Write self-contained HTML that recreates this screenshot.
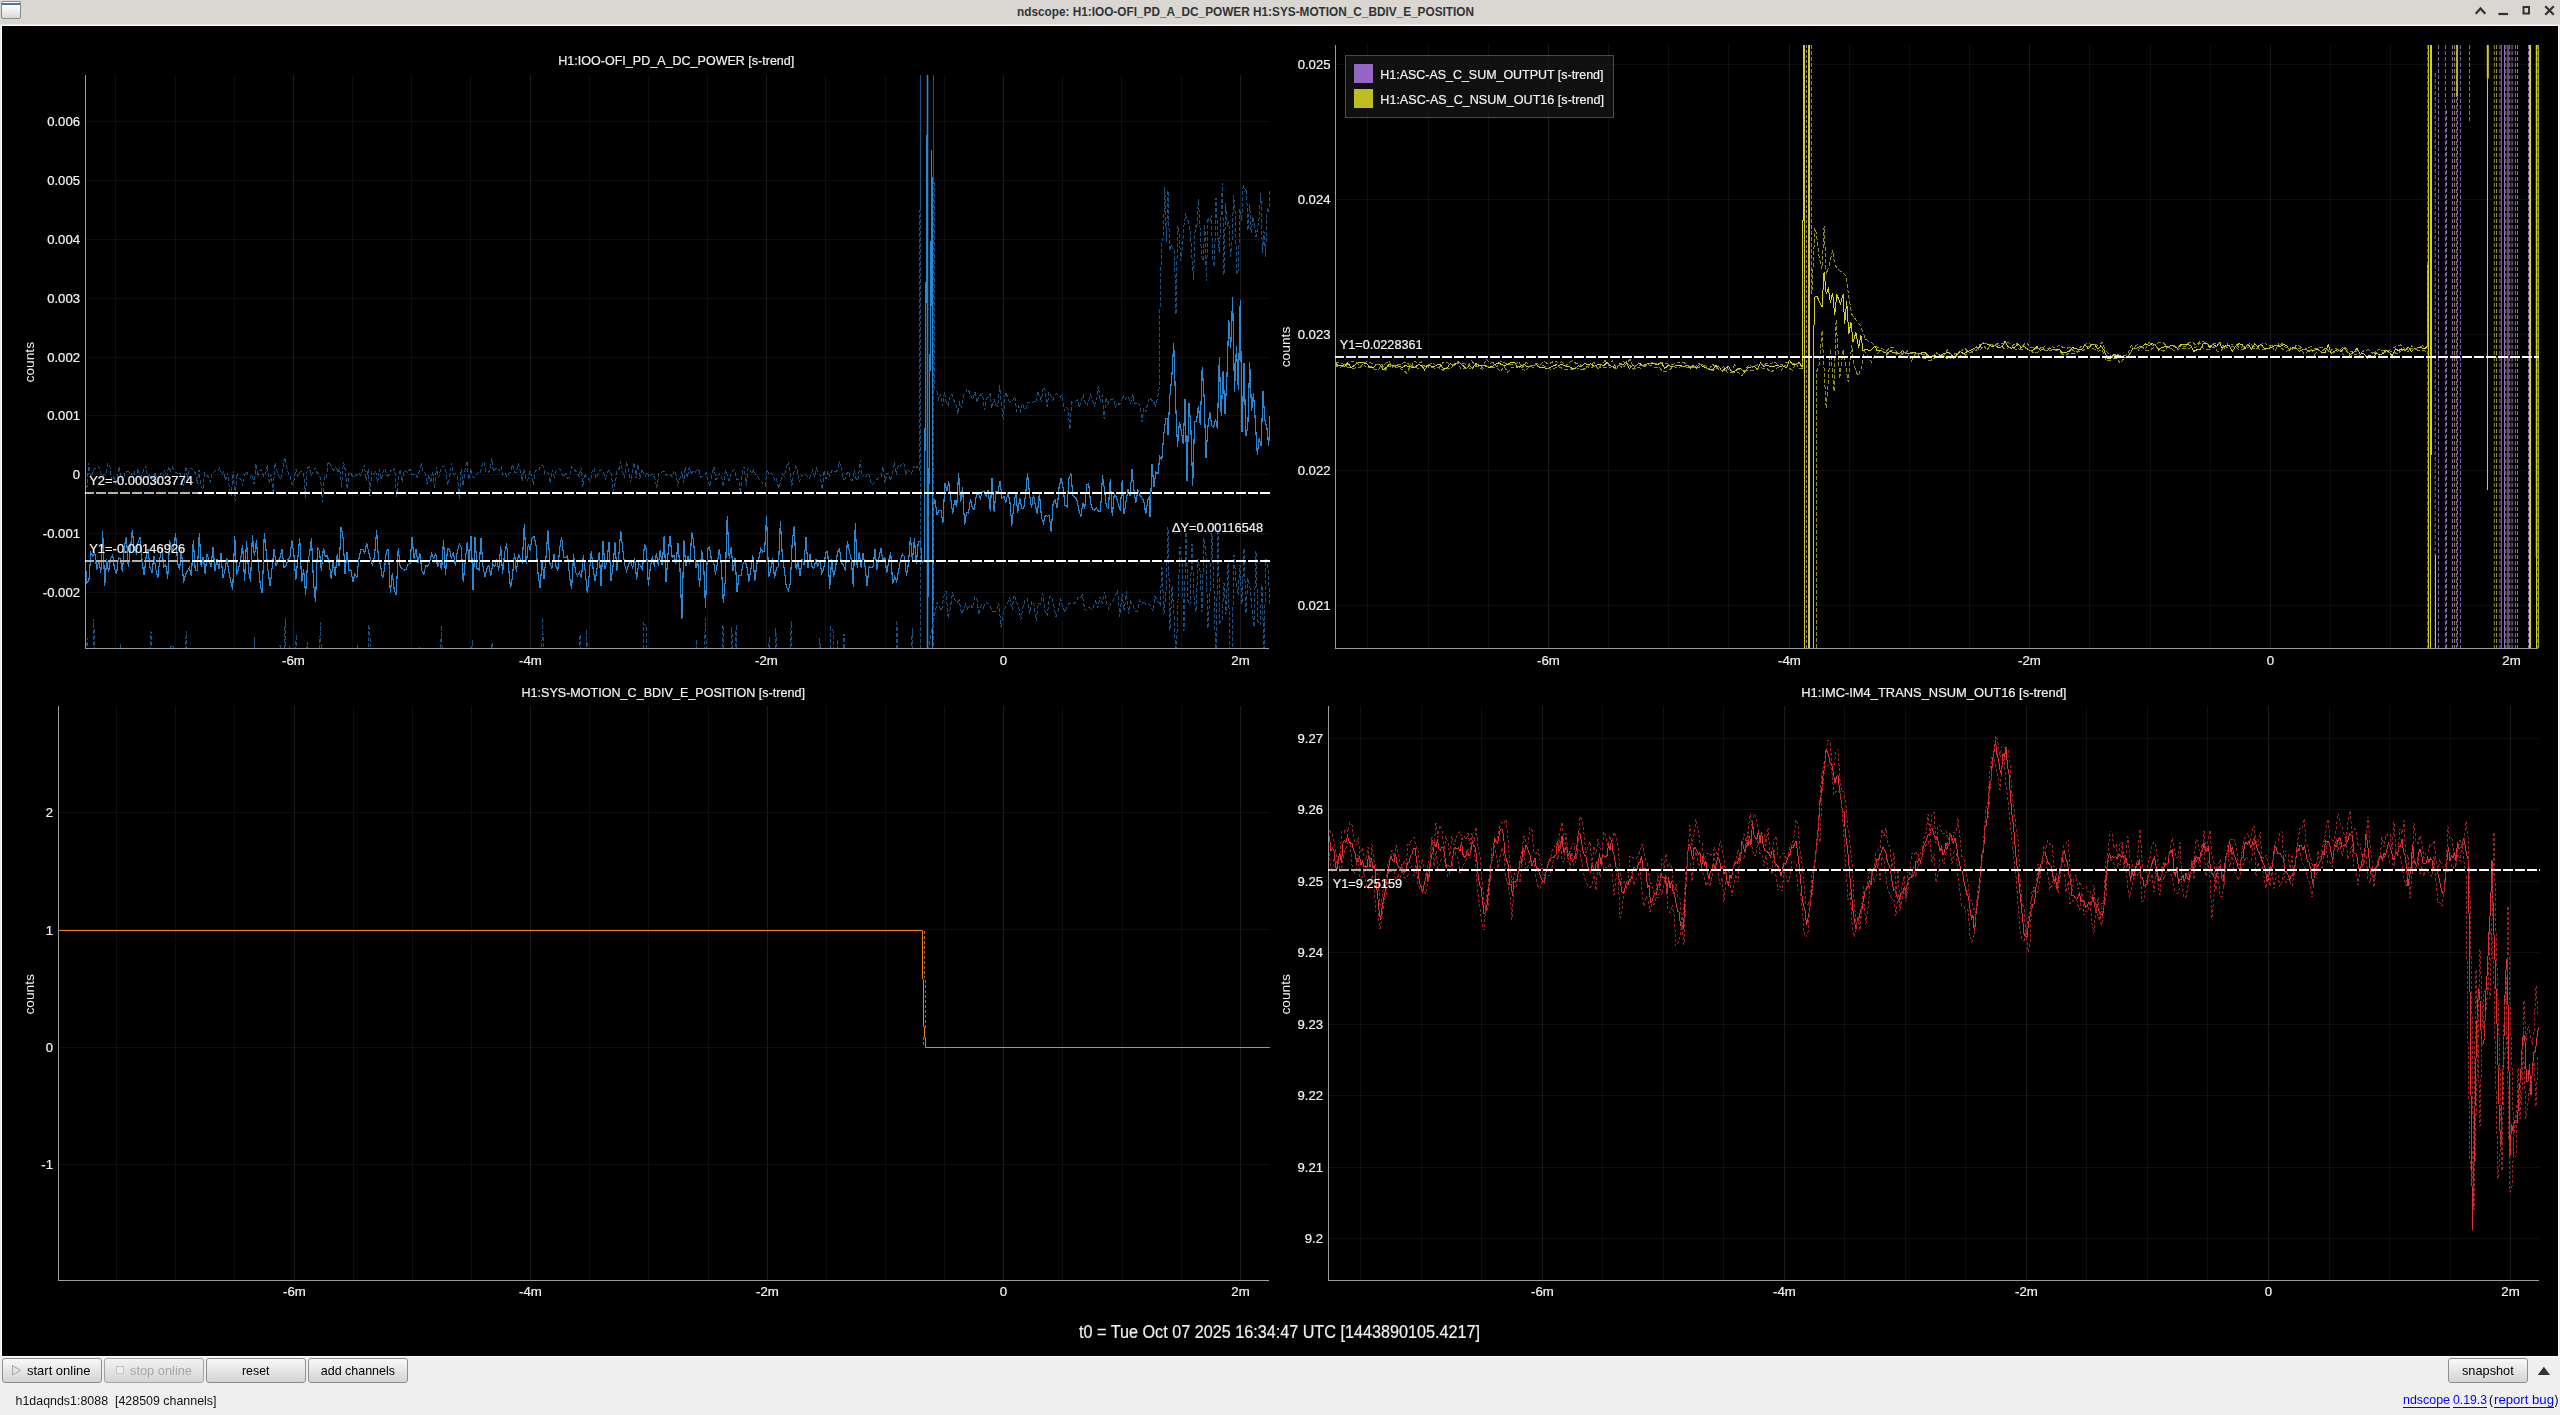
<!DOCTYPE html>
<html><head><meta charset="utf-8"><title>ndscope</title>
<style>
html,body{margin:0;padding:0;width:2560px;height:1415px;overflow:hidden;background:#efefef;font-family:'Liberation Sans',sans-serif;}
.abs{position:absolute}
#titlebar{left:0;top:0;width:2560px;height:24px;background:#dad6d2;}
#panel{left:2px;top:26px;width:2556px;height:1330px;background:#000;}
.btn{position:absolute;top:1358px;height:25px;box-sizing:border-box;border:1px solid #8e8e8e;border-radius:3px;background:linear-gradient(#f9f9f9,#d3d3d3);}
.bt{position:absolute;font-size:13px;color:#000;white-space:pre;top:4px;line-height:15px}
</style></head><body>
<div class="abs" id="titlebar"></div>
<div class="abs" style="left:0;top:24px;width:2560px;height:1px;background:#e9e8e6"></div>
<div class="abs" style="left:1px;top:25px;width:2558px;height:1332px;background:#fff"></div>
<div class="abs" id="panel"></div>
<div class="abs" style="left:1px;top:1px;width:20px;height:18px;box-sizing:border-box;border:1px solid #8a8a86;border-radius:2px;background:linear-gradient(#ffffff 20%,#d8dad6)"></div>
<div class="abs" style="left:2px;top:3px;width:18px;height:2px;background:#4a73ad"></div>
<svg class="abs" style="left:0;top:0" width="2560" height="24"><text x="1017" y="15.5" font-family="'Liberation Sans', sans-serif" font-size="13" font-weight="bold" fill="#2e3436" textLength="457" lengthAdjust="spacingAndGlyphs">ndscope: H1:IOO-OFI_PD_A_DC_POWER H1:SYS-MOTION_C_BDIV_E_POSITION</text><g stroke="#2e3436" stroke-width="2.2" fill="none" stroke-linecap="square">
<path d="M2476.5 13 L2480.5 8.5 L2484.5 13"/>
<path d="M2499.5 14 L2507 14"/>
<rect x="2523.5" y="7" width="5.5" height="6.5" stroke-width="2"/>
<path d="M2546 7 L2553 14 M2553 7 L2546 14"/>
</g></svg>
<svg width="2560" height="1415" viewBox="0 0 2560 1415" style="position:absolute;left:0;top:0;will-change:transform">
<defs>
<clipPath id="cTL"><rect x="85" y="75" width="1185" height="573"/></clipPath>
<clipPath id="cTR"><rect x="1335" y="45" width="1204" height="603"/></clipPath>
<clipPath id="cBL"><rect x="58" y="706" width="1212" height="574"/></clipPath>
<clipPath id="cBR"><rect x="1328" y="706" width="1212" height="574"/></clipPath>
</defs>
<g shape-rendering="crispEdges" stroke-width="1">
<line x1="115.5" y1="75" x2="115.5" y2="648" stroke="#0f0f0f"/>
<line x1="175.5" y1="75" x2="175.5" y2="648" stroke="#0f0f0f"/>
<line x1="234.5" y1="75" x2="234.5" y2="648" stroke="#0f0f0f"/>
<line x1="352.5" y1="75" x2="352.5" y2="648" stroke="#0f0f0f"/>
<line x1="411.5" y1="75" x2="411.5" y2="648" stroke="#0f0f0f"/>
<line x1="470.5" y1="75" x2="470.5" y2="648" stroke="#0f0f0f"/>
<line x1="589.5" y1="75" x2="589.5" y2="648" stroke="#0f0f0f"/>
<line x1="648.5" y1="75" x2="648.5" y2="648" stroke="#0f0f0f"/>
<line x1="707.5" y1="75" x2="707.5" y2="648" stroke="#0f0f0f"/>
<line x1="825.5" y1="75" x2="825.5" y2="648" stroke="#0f0f0f"/>
<line x1="885.5" y1="75" x2="885.5" y2="648" stroke="#0f0f0f"/>
<line x1="944.5" y1="75" x2="944.5" y2="648" stroke="#0f0f0f"/>
<line x1="1062.5" y1="75" x2="1062.5" y2="648" stroke="#0f0f0f"/>
<line x1="1121.5" y1="75" x2="1121.5" y2="648" stroke="#0f0f0f"/>
<line x1="1181.5" y1="75" x2="1181.5" y2="648" stroke="#0f0f0f"/>
<line x1="85" y1="121.5" x2="1269" y2="121.5" stroke="#0f0f0f"/>
<line x1="85" y1="180.5" x2="1269" y2="180.5" stroke="#0f0f0f"/>
<line x1="85" y1="239.5" x2="1269" y2="239.5" stroke="#0f0f0f"/>
<line x1="85" y1="298.5" x2="1269" y2="298.5" stroke="#0f0f0f"/>
<line x1="85" y1="357.5" x2="1269" y2="357.5" stroke="#0f0f0f"/>
<line x1="85" y1="415.5" x2="1269" y2="415.5" stroke="#0f0f0f"/>
<line x1="85" y1="474.5" x2="1269" y2="474.5" stroke="#0f0f0f"/>
<line x1="85" y1="533.5" x2="1269" y2="533.5" stroke="#0f0f0f"/>
<line x1="85" y1="592.5" x2="1269" y2="592.5" stroke="#0f0f0f"/>
<line x1="293.5" y1="75" x2="293.5" y2="648" stroke="#1c1c1c"/>
<line x1="530.5" y1="75" x2="530.5" y2="648" stroke="#1c1c1c"/>
<line x1="766.5" y1="75" x2="766.5" y2="648" stroke="#1c1c1c"/>
<line x1="1003.5" y1="75" x2="1003.5" y2="648" stroke="#1c1c1c"/>
<line x1="1240.5" y1="75" x2="1240.5" y2="648" stroke="#1c1c1c"/>
</g>
<g shape-rendering="crispEdges" stroke-width="1">
<line x1="1367.5" y1="45" x2="1367.5" y2="648" stroke="#0f0f0f"/>
<line x1="1428.5" y1="45" x2="1428.5" y2="648" stroke="#0f0f0f"/>
<line x1="1488.5" y1="45" x2="1488.5" y2="648" stroke="#0f0f0f"/>
<line x1="1608.5" y1="45" x2="1608.5" y2="648" stroke="#0f0f0f"/>
<line x1="1668.5" y1="45" x2="1668.5" y2="648" stroke="#0f0f0f"/>
<line x1="1728.5" y1="45" x2="1728.5" y2="648" stroke="#0f0f0f"/>
<line x1="1849.5" y1="45" x2="1849.5" y2="648" stroke="#0f0f0f"/>
<line x1="1909.5" y1="45" x2="1909.5" y2="648" stroke="#0f0f0f"/>
<line x1="1969.5" y1="45" x2="1969.5" y2="648" stroke="#0f0f0f"/>
<line x1="2089.5" y1="45" x2="2089.5" y2="648" stroke="#0f0f0f"/>
<line x1="2150.5" y1="45" x2="2150.5" y2="648" stroke="#0f0f0f"/>
<line x1="2210.5" y1="45" x2="2210.5" y2="648" stroke="#0f0f0f"/>
<line x1="2330.5" y1="45" x2="2330.5" y2="648" stroke="#0f0f0f"/>
<line x1="2390.5" y1="45" x2="2390.5" y2="648" stroke="#0f0f0f"/>
<line x1="2451.5" y1="45" x2="2451.5" y2="648" stroke="#0f0f0f"/>
<line x1="1335" y1="64.5" x2="2538" y2="64.5" stroke="#0f0f0f"/>
<line x1="1335" y1="199.5" x2="2538" y2="199.5" stroke="#0f0f0f"/>
<line x1="1335" y1="334.5" x2="2538" y2="334.5" stroke="#0f0f0f"/>
<line x1="1335" y1="470.5" x2="2538" y2="470.5" stroke="#0f0f0f"/>
<line x1="1335" y1="605.5" x2="2538" y2="605.5" stroke="#0f0f0f"/>
<line x1="1548.5" y1="45" x2="1548.5" y2="648" stroke="#1c1c1c"/>
<line x1="1789.5" y1="45" x2="1789.5" y2="648" stroke="#1c1c1c"/>
<line x1="2029.5" y1="45" x2="2029.5" y2="648" stroke="#1c1c1c"/>
<line x1="2270.5" y1="45" x2="2270.5" y2="648" stroke="#1c1c1c"/>
<line x1="2511.5" y1="45" x2="2511.5" y2="648" stroke="#1c1c1c"/>
</g>
<g shape-rendering="crispEdges" stroke-width="1">
<line x1="116.5" y1="706" x2="116.5" y2="1280" stroke="#0f0f0f"/>
<line x1="175.5" y1="706" x2="175.5" y2="1280" stroke="#0f0f0f"/>
<line x1="234.5" y1="706" x2="234.5" y2="1280" stroke="#0f0f0f"/>
<line x1="353.5" y1="706" x2="353.5" y2="1280" stroke="#0f0f0f"/>
<line x1="412.5" y1="706" x2="412.5" y2="1280" stroke="#0f0f0f"/>
<line x1="471.5" y1="706" x2="471.5" y2="1280" stroke="#0f0f0f"/>
<line x1="589.5" y1="706" x2="589.5" y2="1280" stroke="#0f0f0f"/>
<line x1="648.5" y1="706" x2="648.5" y2="1280" stroke="#0f0f0f"/>
<line x1="708.5" y1="706" x2="708.5" y2="1280" stroke="#0f0f0f"/>
<line x1="826.5" y1="706" x2="826.5" y2="1280" stroke="#0f0f0f"/>
<line x1="885.5" y1="706" x2="885.5" y2="1280" stroke="#0f0f0f"/>
<line x1="944.5" y1="706" x2="944.5" y2="1280" stroke="#0f0f0f"/>
<line x1="1062.5" y1="706" x2="1062.5" y2="1280" stroke="#0f0f0f"/>
<line x1="1122.5" y1="706" x2="1122.5" y2="1280" stroke="#0f0f0f"/>
<line x1="1181.5" y1="706" x2="1181.5" y2="1280" stroke="#0f0f0f"/>
<line x1="58" y1="812.5" x2="1269" y2="812.5" stroke="#0f0f0f"/>
<line x1="58" y1="929.5" x2="1269" y2="929.5" stroke="#0f0f0f"/>
<line x1="58" y1="1047.5" x2="1269" y2="1047.5" stroke="#0f0f0f"/>
<line x1="58" y1="1164.5" x2="1269" y2="1164.5" stroke="#0f0f0f"/>
<line x1="294.5" y1="706" x2="294.5" y2="1280" stroke="#1c1c1c"/>
<line x1="530.5" y1="706" x2="530.5" y2="1280" stroke="#1c1c1c"/>
<line x1="767.5" y1="706" x2="767.5" y2="1280" stroke="#1c1c1c"/>
<line x1="1003.5" y1="706" x2="1003.5" y2="1280" stroke="#1c1c1c"/>
<line x1="1240.5" y1="706" x2="1240.5" y2="1280" stroke="#1c1c1c"/>
</g>
<g shape-rendering="crispEdges" stroke-width="1">
<line x1="1360.5" y1="706" x2="1360.5" y2="1280" stroke="#0f0f0f"/>
<line x1="1421.5" y1="706" x2="1421.5" y2="1280" stroke="#0f0f0f"/>
<line x1="1481.5" y1="706" x2="1481.5" y2="1280" stroke="#0f0f0f"/>
<line x1="1602.5" y1="706" x2="1602.5" y2="1280" stroke="#0f0f0f"/>
<line x1="1663.5" y1="706" x2="1663.5" y2="1280" stroke="#0f0f0f"/>
<line x1="1723.5" y1="706" x2="1723.5" y2="1280" stroke="#0f0f0f"/>
<line x1="1844.5" y1="706" x2="1844.5" y2="1280" stroke="#0f0f0f"/>
<line x1="1905.5" y1="706" x2="1905.5" y2="1280" stroke="#0f0f0f"/>
<line x1="1965.5" y1="706" x2="1965.5" y2="1280" stroke="#0f0f0f"/>
<line x1="2086.5" y1="706" x2="2086.5" y2="1280" stroke="#0f0f0f"/>
<line x1="2147.5" y1="706" x2="2147.5" y2="1280" stroke="#0f0f0f"/>
<line x1="2207.5" y1="706" x2="2207.5" y2="1280" stroke="#0f0f0f"/>
<line x1="2329.5" y1="706" x2="2329.5" y2="1280" stroke="#0f0f0f"/>
<line x1="2389.5" y1="706" x2="2389.5" y2="1280" stroke="#0f0f0f"/>
<line x1="2450.5" y1="706" x2="2450.5" y2="1280" stroke="#0f0f0f"/>
<line x1="1328" y1="738.5" x2="2539" y2="738.5" stroke="#0f0f0f"/>
<line x1="1328" y1="809.5" x2="2539" y2="809.5" stroke="#0f0f0f"/>
<line x1="1328" y1="881.5" x2="2539" y2="881.5" stroke="#0f0f0f"/>
<line x1="1328" y1="952.5" x2="2539" y2="952.5" stroke="#0f0f0f"/>
<line x1="1328" y1="1024.5" x2="2539" y2="1024.5" stroke="#0f0f0f"/>
<line x1="1328" y1="1095.5" x2="2539" y2="1095.5" stroke="#0f0f0f"/>
<line x1="1328" y1="1167.5" x2="2539" y2="1167.5" stroke="#0f0f0f"/>
<line x1="1328" y1="1238.5" x2="2539" y2="1238.5" stroke="#0f0f0f"/>
<line x1="1542.5" y1="706" x2="1542.5" y2="1280" stroke="#1c1c1c"/>
<line x1="1784.5" y1="706" x2="1784.5" y2="1280" stroke="#1c1c1c"/>
<line x1="2026.5" y1="706" x2="2026.5" y2="1280" stroke="#1c1c1c"/>
<line x1="2268.5" y1="706" x2="2268.5" y2="1280" stroke="#1c1c1c"/>
<line x1="2510.5" y1="706" x2="2510.5" y2="1280" stroke="#1c1c1c"/>
</g>
<path clip-path="url(#cTL)" d="M85 561.5L87 582.8L88.9 580.6L90.9 552.8L92.9 556.2L94.8 552.6L96.8 570.1L98.8 560.1L100.8 573L102.7 531.4L104.7 586.1L106.7 559.5L108.6 571.9L110.6 558.8L112.6 554.9L114.5 568.4L116.5 574.2L118.5 557.8L120.5 558.6L122.4 572L124.4 547.1L126.4 536.8L128.3 567.3L130.3 550.3L132.3 530.3L134.2 548L136.2 553.5L138.2 541.9L140.2 537.1L142.1 561.6L144.1 575.4L146.1 557.3L148 549.1L150 567.2L152 572.5L153.9 556.2L155.9 569.7L157.9 577.7L159.9 557.7L161.8 548L163.8 566.6L165.8 565L167.7 578.6L169.7 540.4L171.7 550.4L173.6 547.6L175.6 533.3L177.6 563L179.6 569.4L181.5 549.2L183.5 583.2L185.5 574.2L187.4 571L189.4 567.4L191.4 576.3L193.3 539.7L195.3 570.8L197.3 570.6L199.3 532.7L201.2 566.6L203.2 557L205.2 573.5L207.1 554L209.1 560.7L211.1 566.5L213 547L215 570.6L217 559.3L219 568.9L220.9 552.7L222.9 578.4L224.9 570.7L226.8 558.2L228.8 571.1L230.8 581.2L232.7 589.7L234.7 535.8L236.7 575.1L238.7 568.4L240.6 559.5L242.6 544.9L244.6 581.1L246.5 540.8L248.5 570.1L250.5 581.8L252.4 535.4L254.4 556.2L256.4 540.1L258.4 564.9L260.3 585.2L262.3 593.4L264.3 532.6L266.2 551.8L268.2 572.3L270.2 586.3L272.1 567.7L274.1 549.1L276.1 565.8L278.1 560.7L280 557.7L282 549.2L284 567.2L285.9 565.9L287.9 559.5L289.9 557.5L291.8 540.4L293.8 553.2L295.8 580.3L297.8 558L299.7 538L301.7 582.4L303.7 569.5L305.6 594.7L307.6 562L309.6 553.6L311.5 537.8L313.5 582.2L315.5 602.1L317.5 547.9L319.4 550.6L321.4 570.5L323.4 547.7L325.3 556.7L327.3 555.4L329.3 564.1L331.2 578.5L333.2 561.4L335.2 575.7L337.2 554.3L339.1 566.2L341.1 526.8L343.1 537.8L345 573.7L347 551.6L349 570.3L350.9 569.7L352.9 582.2L354.9 574L356.9 577.3L358.8 559.2L360.8 549.8L362.8 549.3L364.7 553.2L366.7 542.9L368.7 552.2L370.6 559.5L372.6 565L374.6 555.6L376.6 530.2L378.5 559.8L380.5 564.6L382.5 578.4L384.4 570.2L386.4 550.7L388.4 549.4L390.3 593.2L392.3 573.1L394.3 590.3L396.3 595.1L398.2 547.9L400.2 567.2L402.2 568.3L404.1 570L406.1 569.7L408.1 564.2L410 563.8L412 537L414 558.4L416 549L417.9 563L419.9 553.5L421.9 570.9L423.8 574.1L425.8 565.9L427.8 566.1L429.7 562.5L431.7 553.8L433.7 558.4L435.7 553.1L437.6 567.2L439.6 561.2L441.6 570.3L443.5 539.7L445.5 575.2L447.5 548.8L449.4 549.3L451.4 557.8L453.4 552L455.4 565.7L457.3 551.8L459.3 543.9L461.3 547.5L463.2 582L465.2 561.7L467.2 542.3L469.1 561.1L471.1 536.1L473.1 589.6L475.1 536.6L477 568.7L479 569.7L481 537.8L482.9 565.8L484.9 577L486.9 568.5L488.8 565.2L490.8 576.2L492.8 563.6L494.8 566.4L496.7 559L498.7 571.1L500.7 545.9L502.6 573.7L504.6 552.9L506.6 543.5L508.5 566.8L510.5 588.1L512.5 576.4L514.5 552.7L516.4 572.2L518.4 553.7L520.4 559L522.3 562.4L524.3 523.9L526.3 564.1L528.2 544.5L530.2 549.8L532.2 537.4L534.2 536.7L536.1 545.9L538.1 574.2L540.1 587.7L542 560.6L544 578.5L546 556.8L547.9 530.4L549.9 563.4L551.9 568.1L553.9 554.1L555.8 565.8L557.8 570.2L559.8 547.2L561.7 537.4L563.7 557.5L565.7 557.6L567.6 555.4L569.6 576.8L571.6 588.6L573.6 554.3L575.5 572.2L577.5 576.1L579.5 572.4L581.4 577.8L583.4 554.8L585.4 572.8L587.3 593.4L589.3 573.9L591.3 551.1L593.3 570.7L595.2 581.2L597.2 566.9L599.2 552L601.1 585.7L603.1 541L605.1 569.1L607 560.7L609 541.9L611 580.5L613 566.6L614.9 542.3L616.9 570.6L618.9 554.1L620.8 530.6L622.8 550L624.8 565.2L626.7 571.2L628.7 563.6L630.7 561.7L632.7 568.5L634.6 557.6L636.6 579.8L638.6 563.4L640.5 565.7L642.5 569.7L644.5 544.1L646.4 549.7L648.4 585.5L650.4 566.4L652.4 556.5L654.3 566.5L656.3 553.3L658.3 565.5L660.2 550.3L662.2 565.4L664.2 535.8L666.1 582.3L668.1 552.8L670.1 535.7L672.1 557.4L674 555.1L676 563.4L678 542.7L679.9 567.4L681.9 619L683.9 540.5L685.8 566.4L687.8 556L689.8 564.1L691.8 532L693.7 542.6L695.7 568.4L697.7 560.4L699.6 587.2L701.6 549.7L703.6 563.8L705.5 607.6L707.5 548.8L709.5 546.5L711.5 560.4L713.4 560.3L715.4 574.5L717.4 563.1L719.3 548.9L721.3 564.4L723.3 603.2L725.2 581.3L727.2 516.5L729.2 558.7L731.2 547L733.1 571L735.1 558.2L737.1 591.9L739 575.9L741 575.2L743 564L744.9 560.4L746.9 566.4L748.9 581.7L750.9 569.6L752.8 555.4L754.8 581.4L756.8 564.1L758.7 559.8L760.7 548.3L762.7 551.9L764.6 550.8L766.6 516.3L768.6 577.3L770.6 570.1L772.5 557.6L774.5 577.7L776.5 568L778.4 566.9L780.4 521.4L782.4 557.3L784.3 569.5L786.3 586.8L788.3 590.4L790.3 583.8L792.2 542.4L794.2 525.8L796.2 570.1L798.1 561.4L800.1 576.4L802.1 559L804 564.5L806 537L808 568.2L810 553.9L811.9 566.6L813.9 568.4L815.9 559.1L817.8 566.1L819.8 560.8L821.8 573.1L823.7 569L825.7 552.2L827.7 551.6L829.7 588.9L831.6 559.4L833.6 576.9L835.6 567.3L837.5 552L839.5 549L841.5 562.9L843.4 565.1L845.4 570.8L847.4 540.7L849.4 551.5L851.3 559.5L853.3 586.6L855.3 523.2L857.2 568L859.2 552.4L861.2 567.9L863.1 553.1L865.1 566.8L867.1 586L869.1 566.7L871 567.9L873 567L875 549L876.9 569.7L878.9 557.7L880.9 548L882.8 560.4L884.8 557.4L886.8 573.1L888.8 560.3L890.7 552.5L892.7 584.3L894.7 576.8L896.6 581.3L898.6 570.7L900.6 559.2L902.5 554.3L904.5 556.5L906.5 576.2L908.5 562.8L910.4 537.3L912.4 560.4L914.4 538.3L916.3 563.7L918.3 541.7L920.3 540.8L922.2 562.9L924.2 559.7L927.5 75L927.5 648L931.9 150L932.5 648L934 499L935 499.9L937 514.6L938.9 510.4L940.9 510.1L942.9 522.7L944.9 483.1L946.8 491.2L948.8 481.5L950.8 498.5L952.7 514L954.7 499.7L956.7 506.9L958.6 473.2L960.6 502.1L962.6 487.3L964.6 524.9L966.5 512.4L968.5 513.3L970.5 499.2L972.4 508.6L974.4 509.2L976.4 495.2L978.3 493L980.3 498.4L982.3 491.5L984.3 491.7L986.2 496L988.2 489.8L990.2 510.7L992.1 477.7L994.1 511.5L996.1 491.2L998 492.4L1000 481.1L1002 498L1004 496.5L1005.9 502.7L1007.9 492.5L1009.9 501.3L1011.8 525.5L1013.8 505.7L1015.8 492L1017.7 513.3L1019.7 498.2L1021.7 508.3L1023.7 508.6L1025.6 494.5L1027.6 473L1029.6 495.1L1031.5 507.7L1033.5 494.7L1035.5 506.1L1037.4 513.7L1039.4 492.4L1041.4 517.2L1043.4 522.7L1045.3 515.1L1047.3 516.3L1049.3 515.4L1051.2 531.6L1053.2 502.6L1055.2 500L1057.1 508.4L1059.1 487.3L1061.1 478.3L1063.1 487.7L1065 505.2L1067 506.6L1069 478.5L1070.9 473.6L1072.9 495.6L1074.9 497.4L1076.8 499.3L1078.8 509.4L1080.8 517.2L1082.8 503.2L1084.7 508.6L1086.7 484.7L1088.7 483.5L1090.6 503.3L1092.6 509.3L1094.6 510.2L1096.5 508.3L1098.5 511L1100.5 511.3L1102.5 475.5L1104.4 489.7L1106.4 506.4L1108.4 508.4L1110.3 478.8L1112.3 516.4L1114.3 493.9L1116.2 496.7L1118.2 503.8L1120.2 510.5L1122.2 479.9L1124.1 513.9L1126.1 501.1L1128.1 489.2L1130 496.1L1132 469.4L1134 490.9L1135.9 502.5L1137.9 490.1L1139.9 495.4L1141.9 497.9L1143.8 500.7L1145.8 514.3L1147.8 499.7L1149.7 496.4L1150 516.8L1152 463.7L1153.9 486.9L1155.9 472.4L1157.9 473.8L1159.9 456.6L1161.8 459.5L1163.8 434.6L1165.8 418.4L1167.7 418.2L1168 435L1169.9 395.8L1171.8 377.4L1173.7 342.7L1175.6 401.9L1177.5 446.8L1179.4 421.7L1181.3 430.8L1183.2 444.2L1185.1 399.1L1187 480.8L1188.9 402.9L1190.8 425.6L1192.7 485.5L1194.6 422L1196.5 421.2L1198.4 405.8L1200.3 424.9L1202.2 366.7L1204.1 396.9L1206 457.5L1207.9 426.9L1209.8 412.2L1211.7 425.8L1213.6 427.6L1215.5 419.4L1217.4 428.7L1219.3 357.4L1221.2 416.1L1223.1 371.4L1225 414.2L1226.9 378L1228.8 320L1230.7 347.9L1232.6 296.7L1234.5 391.7L1236.4 346.4L1238.3 390.2L1240.2 300.1L1242.1 432.3L1244 363.2L1245.9 436L1247.8 427.3L1249.7 362.4L1251.6 411.4L1253.5 393.3L1255.4 422.7L1257.3 454.7L1259.2 438.1L1261.1 446.4L1263 391.1L1264.9 420.2L1266.8 427L1268.7 445.5L1270.6 405.6" fill="none" stroke="#2b86cf" stroke-width="1.15" stroke-linejoin="miter" shape-rendering="crispEdges"/>
<line clip-path="url(#cTL)" x1="927.5" y1="75" x2="927.5" y2="648" stroke="#2b86cf" stroke-width="1.6"/>
<path clip-path="url(#cTL)" d="M85 481L86.9 488L88.8 463.1L90.7 480.4L92.6 471.8L94.5 468L96.4 468L98.3 466.6L100.2 470.9L102.1 476.2L104 474.9L105.9 475.2L107.8 463.5L109.7 464.1L111.6 479.8L113.5 476.8L115.4 482.9L117.3 478L119.2 466.9L121.1 478.4L123 480.8L124.9 473.1L126.8 471.4L128.7 472L130.6 472.1L132.5 476.5L134.4 472.6L136.3 480.5L138.2 468.2L140.1 480.1L142 474.5L143.9 469.2L145.8 466.1L147.7 477.1L149.6 474.6L151.5 479.1L153.4 477.5L155.3 472.2L157.2 482.8L159.1 478.7L161 472.9L162.9 476.9L164.8 471.2L166.7 476.7L168.6 466.8L170.5 470.6L172.4 467.1L174.3 471.6L176.2 472.4L178.1 474.3L180 473.2L181.9 478.8L183.8 486.3L185.7 465.9L187.6 479.4L189.5 468.2L191.4 468.3L193.3 471.1L195.2 472.6L197.1 483.5L199 470L200.9 486.1L202.8 489.8L204.7 473.1L206.6 475.3L208.5 476.7L210.4 481.6L212.3 472.9L214.2 471.9L216.1 470L218 470.7L219.9 467.3L221.8 475.2L223.7 471.7L225.6 480.1L227.5 473L229.4 488.3L231.3 496.1L233.2 470.6L235.1 500.5L237 473L238.9 478.3L240.8 479.1L242.7 485.6L244.6 475.5L246.5 471.4L248.4 475.7L250.3 477.3L252.2 474.5L254.1 484.3L256 463.6L257.9 476.7L259.8 470.5L261.7 469.9L263.6 476.5L265.5 474.7L267.4 464.9L269.3 483.7L271.2 474.6L273.1 491.6L275 463L276.9 471.1L278.8 475.6L280.7 479.6L282.6 469.8L284.5 457.3L286.4 465.1L288.3 473.3L290.2 476.3L292.1 484.6L294 479.9L295.9 468.9L297.8 476.4L299.7 472.2L301.6 471.6L303.5 472.1L305.4 497.6L307.3 467.5L309.2 466.9L311.1 475.5L313 472.2L314.9 467.9L316.8 472.5L318.7 473.9L320.6 478.7L322.5 501.9L324.4 476.6L326.3 478.2L328.2 462L330.1 464.4L332 468.5L333.9 470.2L335.8 467.1L337.7 472.3L339.6 468L341.5 487.2L343.4 461.8L345.3 469.7L347.2 489.1L349.1 471.9L351 473.6L352.9 477.2L354.8 476.1L356.7 474.9L358.6 473.1L360.5 475.6L362.4 471.1L364.3 464.8L366.2 480.8L368.1 469.2L370 496.1L371.9 471L373.8 474.4L375.7 471.1L377.6 482.7L379.5 469.3L381.4 479.6L383.3 470.5L385.2 469L387.1 476.3L389 474.6L390.9 469.9L392.8 471.5L394.7 468.5L396.6 496.9L398.5 478.8L400.4 469.4L402.3 482.1L404.2 470.2L406.1 471.8L408 472.3L409.9 469.2L411.8 474.1L413.7 474.3L415.6 474.6L417.5 477.5L419.4 470.6L421.3 464.6L423.2 471.5L425.1 473L427 484.1L428.9 474.9L430.8 482.4L432.7 471.4L434.6 488.6L436.5 467.1L438.4 478L440.3 471L442.2 466.6L444.1 466.4L446 472.2L447.9 485.1L449.8 475.9L451.7 463.5L453.6 474.4L455.5 473.7L457.4 475.1L459.3 499.1L461.2 468.8L463.1 485.2L465 470.1L466.9 460.9L468.8 479.5L470.7 468.7L472.6 476.8L474.5 477.7L476.4 474.3L478.3 472.9L480.2 473.4L482.1 464.8L484 461.7L485.9 471.5L487.8 473L489.7 470.6L491.6 458.4L493.5 471.9L495.4 469.2L497.3 467.6L499.2 470.5L501.1 466.8L503 474.8L504.9 472.9L506.8 476.6L508.7 473.4L510.6 472L512.5 464.4L514.4 472.3L516.3 472.4L518.2 463.6L520.1 470L522 480.7L523.9 469.1L525.8 479.1L527.7 480.5L529.6 471L531.5 474.8L533.4 484.5L535.3 470.3L537.2 470.5L539.1 469.9L541 465.1L542.9 465.3L544.8 473L546.7 472L548.6 473.2L550.5 483L552.4 469.7L554.3 477L556.2 470.7L558.1 468.7L560 469.2L561.9 473.6L563.8 476.9L565.7 473.7L567.6 478.1L569.5 477.1L571.4 466.4L573.3 467.7L575.2 470.7L577.1 472.6L579 476.7L580.9 467.2L582.8 487.4L584.7 473.2L586.6 478.1L588.5 478.9L590.4 481.2L592.3 470.9L594.2 468L596.1 478.3L598 474.2L599.9 470.2L601.8 469.8L603.7 473.5L605.6 478.4L607.5 471.6L609.4 470.6L611.3 473.3L613.2 491.3L615.1 483.3L617 471.3L618.9 469L620.8 461.5L622.7 472.3L624.6 477.9L626.5 461.7L628.4 468.8L630.3 482.3L632.2 473.6L634.1 462.5L636 478.4L637.9 464.9L639.8 478.9L641.7 469.1L643.6 473.5L645.5 476.2L647.4 471.9L649.3 477.3L651.2 474.5L653.1 474.5L655 478.6L656.9 488.2L658.8 473.4L660.7 472.7L662.6 471.5L664.5 471.6L666.4 475.3L668.3 474.4L670.2 474.4L672.1 477.1L674 470.7L675.9 474.2L677.8 484.8L679.7 479.6L681.6 471L683.5 482.6L685.4 467.4L687.3 477.8L689.2 466.7L691.1 474L693 471.1L694.9 473L696.8 470.1L698.7 469.3L700.6 477L702.5 476.2L704.4 476.4L706.3 473L708.2 482.7L710.1 486.2L712 474.7L713.9 466.8L715.8 479.5L717.7 478.3L719.6 473.4L721.5 475.6L723.4 486.9L725.3 470.5L727.2 474.8L729.1 480.7L731 473.6L732.9 470.7L734.8 469.7L736.7 479.5L738.6 480L740.5 493.1L742.4 471.1L744.3 466.7L746.2 486.2L748.1 467.8L750 469.9L751.9 474L753.8 469.6L755.7 475L757.6 476L759.5 479.6L761.4 481.2L763.3 484.5L765.2 485.8L767.1 469.5L769 475L770.9 473.3L772.8 474.2L774.7 480.7L776.6 478.6L778.5 487.9L780.4 483.3L782.3 474L784.2 476.2L786.1 467.9L788 462L789.9 471.8L791.8 486L793.7 473.2L795.6 466.6L797.5 470.3L799.4 482.2L801.3 475.7L803.2 475.1L805.1 474L807 475.7L808.9 478.5L810.8 476L812.7 470L814.6 476.7L816.5 468.8L818.4 473.6L820.3 475L822.2 489.7L824.1 470.9L826 479.3L827.9 471.2L829.8 475.9L831.7 470.6L833.6 470.8L835.5 472.1L837.4 470.3L839.3 462.1L841.2 466.1L843.1 478.9L845 479.4L846.9 473.7L848.8 471.9L850.7 479.8L852.6 480.4L854.5 470.4L856.4 480.5L858.3 478.7L860.2 460L862.1 476.9L864 474.8L865.9 477L867.8 473.3L869.7 476.3L871.6 484.6L873.5 483.6L875.4 481.9L877.3 479.1L879.2 476.7L881.1 476.8L883 466.5L884.9 483.3L886.8 473.3L888.7 473.7L890.6 480.7L892.5 474.5L894.4 462L896.3 474.5L898.2 465.8L900.1 467.2L902 462.9L903.9 463.6L905.8 475L907.7 469.6L909.6 471.6L911.5 473.9L913.4 466.3L915.3 468.5L917.2 466.1L919.1 470.6L920.5 75L920.5 648L933.5 648L933.5 75L935 390.3L936.9 391.4L938.8 399.6L940.7 394.6L942.6 406L944.5 391.4L946.4 403.2L948.3 405L950.2 396L952.1 394.1L954 400.6L955.9 404.7L957.8 414.1L959.7 402.9L961.6 407.4L963.5 395.5L965.4 393.2L967.3 388.5L969.2 391.7L971.1 396.4L973 399.1L974.9 391.9L976.8 402.5L978.7 397.4L980.6 394.5L982.5 393.8L984.4 409.9L986.3 398.9L988.2 397.2L990.1 393.9L992 408.1L993.9 398.8L995.8 405L997.7 406.2L999.6 385.2L1001.5 405.4L1003.4 420.3L1005.3 392L1007.2 395.8L1009.1 401.1L1011 401.3L1012.9 400.3L1014.8 396L1016.7 411.5L1018.6 406.3L1020.5 411.5L1022.4 403.5L1024.3 408.6L1026.2 409.5L1028.1 401.9L1030 402.8L1031.9 403L1033.8 401L1035.7 402.7L1037.6 390.9L1039.5 396.2L1041.4 400.7L1043.3 387L1045.2 390.1L1047.1 406.7L1049 392.4L1050.9 395.9L1052.8 400.1L1054.7 395.4L1056.6 393.7L1058.5 395.2L1060.4 396.9L1062.3 394.8L1064.2 410.9L1066.1 407L1068 408.8L1069.9 429.2L1071.8 402.1L1073.7 402.9L1075.6 401.2L1077.5 400L1079.4 407.4L1081.3 399.7L1083.2 394.9L1085.1 402.1L1087 406.3L1088.9 400L1090.8 394.9L1092.7 400.9L1094.6 406.1L1096.5 398L1098.4 386L1100.3 401.9L1102.2 394.9L1104.1 418.8L1106 397.4L1107.9 404.2L1109.8 399.3L1111.7 399.5L1113.6 398.8L1115.5 407.2L1117.4 402.8L1119.3 404.7L1121.2 401.8L1123.1 395L1125 400.4L1126.9 396.3L1128.8 398.3L1130.7 403.2L1132.6 394.3L1134.5 403.8L1136.4 403.2L1138.3 402.2L1140.2 406.6L1142.1 422.1L1144 408.2L1145.9 411.9L1147.8 402.8L1149.7 397.2L1151.6 400.4L1153.5 401.4L1155.4 405.3L1157.3 399L1159.2 388.3L1160 307.3L1161.6 243.7L1163.2 237.1L1164.8 187.5L1166.4 242.2L1168 190.7L1169.6 251.1L1171.2 244.6L1172.8 248.7L1174.4 250.1L1176 314.7L1177.6 225.7L1179.2 234.9L1180.8 260.5L1182.4 246.2L1184 225.1L1185.6 214.8L1187.2 218.6L1188.8 222.4L1190.4 233.3L1192 258L1193.6 280L1195.2 225.6L1196.8 228.6L1198.4 199.5L1200 227.3L1201.6 257.1L1203.2 260.5L1204.8 224.1L1206.4 281L1208 218L1209.6 223L1211.2 215L1212.8 259.4L1214.4 267.2L1216 198.2L1217.6 233.5L1219.2 253.4L1220.8 221.2L1222.4 182.9L1224 275.1L1225.6 203.1L1227.2 226L1228.8 221.3L1230.4 256.7L1232 242.4L1233.6 195.5L1235.2 213L1236.8 274.7L1238.4 269.5L1240 209.3L1241.6 221.3L1243.2 184.1L1244.8 191.4L1246.4 188.1L1248 230.1L1249.6 203.8L1251.2 233.2L1252.8 216.6L1254.4 225.4L1256 236.9L1257.6 228.3L1259.2 217.5L1260.8 192.9L1262.4 253L1264 231.4L1265.6 256.8L1267.2 208.2L1268.8 211.7L1270.4 182.4" fill="none" stroke="#1b5283" stroke-width="1" stroke-linejoin="miter" shape-rendering="crispEdges" stroke-dasharray="4 2"/>
<path clip-path="url(#cTL)" d="M85 700L87.2 638.2L89.4 700L91.6 700L93.8 619.5L96 700L98.2 700L100.4 700L102.6 700L104.8 700L107 700L109.2 700L111.4 700L113.6 700L115.8 700L118 700L120.2 643.3L122.4 700L124.6 700L126.8 700L129 700L131.2 700L133.4 700L135.6 700L137.8 700L140 700L142.2 700L144.4 700L146.6 700L148.8 700L151 631.4L153.2 700L155.4 700L157.6 700L159.8 700L162 700L164.2 700L166.4 700L168.6 700L170.8 646.6L173 647.1L175.2 700L177.4 700L179.6 700L181.8 700L184 700L186.2 630.7L188.4 700L190.6 700L192.8 700L195 700L197.2 700L199.4 700L201.6 700L203.8 700L206 700L208.2 700L210.4 700L212.6 700L214.8 700L217 700L219.2 700L221.4 700L223.6 700L225.8 700L228 700L230.2 700L232.4 700L234.6 700L236.8 700L239 700L241.2 700L243.4 700L245.6 700L247.8 700L250 700L252.2 700L254.4 636.8L256.6 700L258.8 700L261 700L263.2 700L265.4 700L267.6 700L269.8 700L272 700L274.2 700L276.4 700L278.6 645.9L280.8 645.6L283 700L285.2 618.4L287.4 700L289.6 646.4L291.8 700L294 700L296.2 634.7L298.4 700L300.6 700L302.8 700L305 700L307.2 642.3L309.4 700L311.6 700L313.8 700L316 700L318.2 700L320.4 622.3L322.6 700L324.8 700L327 700L329.2 700L331.4 700L333.6 700L335.8 700L338 700L340.2 700L342.4 700L344.6 700L346.8 700L349 700L351.2 700L353.4 700L355.6 700L357.8 645.4L360 700L362.2 700L364.4 700L366.6 700L368.8 624.6L371 647.2L373.2 700L375.4 700L377.6 700L379.8 700L382 700L384.2 700L386.4 700L388.6 700L390.8 700L393 700L395.2 700L397.4 700L399.6 700L401.8 700L404 700L406.2 700L408.4 700L410.6 700L412.8 700L415 700L417.2 700L419.4 647L421.6 700L423.8 700L426 700L428.2 700L430.4 700L432.6 700L434.8 700L437 700L439.2 700L441.4 625.4L443.6 700L445.8 700L448 700L450.2 700L452.4 700L454.6 700L456.8 700L459 700L461.2 700L463.4 700L465.6 700L467.8 700L470 700L472.2 639.7L474.4 700L476.6 700L478.8 700L481 700L483.2 700L485.4 700L487.6 700L489.8 700L492 642.3L494.2 700L496.4 700L498.6 700L500.8 700L503 700L505.2 700L507.4 700L509.6 700L511.8 700L514 700L516.2 700L518.4 700L520.6 700L522.8 700L525 700L527.2 700L529.4 700L531.6 700L533.8 700L536 700L538.2 700L540.4 700L542.6 618.3L544.8 700L547 700L549.2 700L551.4 700L553.6 700L555.8 700L558 700L560.2 700L562.4 700L564.6 700L566.8 700L569 700L571.2 700L573.4 700L575.6 700L577.8 700L580 634.5L582.2 700L584.4 700L586.6 629.6L588.8 700L591 700L593.2 700L595.4 700L597.6 700L599.8 700L602 700L604.2 700L606.4 700L608.6 700L610.8 700L613 700L615.2 700L617.4 700L619.6 700L621.8 700L624 700L626.2 700L628.4 700L630.6 700L632.8 700L635 700L637.2 700L639.4 700L641.6 700L643.8 623.5L646 625.9L648.2 700L650.4 700L652.6 700L654.8 700L657 700L659.2 700L661.4 700L663.6 700L665.8 700L668 700L670.2 700L672.4 700L674.6 700L676.8 700L679 700L681.2 700L683.4 700L685.6 700L687.8 700L690 700L692.2 700L694.4 700L696.6 639.3L698.8 700L701 700L703.2 700L705.4 618.4L707.6 700L709.8 700L712 700L714.2 700L716.4 700L718.6 700L720.8 700L723 625.2L725.2 700L727.4 700L729.6 700L731.8 626.9L734 700L736.2 624.8L738.4 700L740.6 700L742.8 700L745 700L747.2 700L749.4 700L751.6 700L753.8 700L756 700L758.2 700L760.4 700L762.6 700L764.8 700L767 700L769.2 637L771.4 700L773.6 700L775.8 627.9L778 700L780.2 700L782.4 700L784.6 700L786.8 700L789 700L791.2 620.9L793.4 700L795.6 700L797.8 700L800 700L802.2 700L804.4 700L806.6 700L808.8 700L811 700L813.2 700L815.4 700L817.6 700L819.8 638.2L822 700L824.2 700L826.4 700L828.6 700L830.8 627.2L833 631.1L835.2 700L837.4 639.6L839.6 700L841.8 700L844 633.9L846.2 700L848.4 700L850.6 700L852.8 700L855 700L857.2 700L859.4 700L861.6 700L863.8 700L866 700L868.2 700L870.4 700L872.6 700L874.8 700L877 700L879.2 700L881.4 700L883.6 700L885.8 700L888 700L890.2 700L892.4 700L894.6 700L896.8 619.8L899 700L901.2 700L903.4 700L905.6 700L907.8 700L910 700L912.2 628.3L914.4 700L916.6 700L918.8 700L935 613.4L937.2 602.1L939.4 606.8L941.6 610.6L943.8 596.3L946 591.2L948.2 618.1L950.4 607.8L952.6 592.5L954.8 599.6L957 602.7L959.2 600L961.4 613.8L963.6 609.2L965.8 604L968 610.1L970.2 603.7L972.4 608.3L974.6 596.8L976.8 598.6L979 614.6L981.2 604.8L983.4 607.7L985.6 602.8L987.8 603.2L990 604.5L992.2 611.6L994.4 611.8L996.6 610.8L998.8 603.1L1001 626.6L1003.2 612.9L1005.4 607L1007.6 603.2L1009.8 598.1L1012 610.4L1014.2 594.8L1016.4 601.6L1018.6 606.4L1020.8 620.1L1023 606.8L1025.2 599.7L1027.4 598.4L1029.6 613.5L1031.8 601.3L1034 604.6L1036.2 620.7L1038.4 603.2L1040.6 604.2L1042.8 593.6L1045 610.6L1047.2 616.2L1049.4 596.2L1051.6 597.1L1053.8 606.2L1056 616.6L1058.2 610.2L1060.4 598.5L1062.6 605.7L1064.8 612.4L1067 606.8L1069.2 603.2L1071.4 604L1073.6 603.5L1075.8 602.4L1078 597.4L1080.2 598.6L1082.4 594.8L1084.6 609.5L1086.8 610.3L1089 607.4L1091.2 609.2L1093.4 607L1095.6 601.2L1097.8 608.2L1100 596.8L1102.2 603.5L1104.4 591.8L1106.6 603L1108.8 609.7L1111 603.1L1113.2 600.8L1115.4 595.3L1117.6 590.7L1119.8 616.6L1122 594L1124.2 611.4L1126.4 591.5L1128.6 614.1L1130.8 601.6L1133 605.3L1135.2 611.3L1137.4 611.1L1139.6 600.2L1141.8 604.4L1144 600.8L1146.2 605.5L1148.4 604.4L1150.6 605.1L1152.8 611.2L1155 596.2L1157.2 601.3L1159.4 602.8L1160 605.9L1162 567.5L1164 613.6L1166 591.7L1168 527.2L1170 630.1L1172 586.1L1174 614.8L1176 663.5L1178 600.7L1180 547L1182 562.8L1184 630.7L1186 531.7L1188 600.5L1190 605L1192 544L1194 596.8L1196 612.2L1198 559.1L1200 570.8L1202 611.8L1204 538L1206 554.8L1208 628.2L1210 593.4L1212 533.4L1214 590.5L1216 667.6L1218 529.5L1220 622.6L1222 620.3L1224 582.9L1226 614.2L1228 563L1230 651.8L1232 658.8L1234 554.8L1236 581.5L1238 595.3L1240 565L1242 604.1L1244 548.5L1246 613.1L1248 578L1250 588L1252 608.8L1254 627.1L1256 550.7L1258 621.6L1260 625.2L1262 585.4L1264 651.5L1266 559.4L1268 568.2L1270 605.3" fill="none" stroke="#1b5283" stroke-width="1" stroke-linejoin="miter" shape-rendering="crispEdges" stroke-dasharray="4 2"/>
<path clip-path="url(#cTR)" d="M1335 362.5L1338.2 365.6L1341.4 365.1L1344.6 366.2L1347.8 362.5L1351 367.5L1354.2 365.5L1357.4 363L1360.6 362.7L1363.8 362.8L1367 364.1L1370.2 367.9L1373.4 367.4L1376.6 364.6L1379.8 364.6L1383 369.6L1386.2 367.6L1389.4 364.2L1392.6 365.6L1395.8 365.1L1399 366.3L1402.2 367.7L1405.4 365.4L1408.6 366.7L1411.8 367.1L1415 367.5L1418.2 364.6L1421.4 365.4L1424.6 369.8L1427.8 365.5L1431 365.9L1434.2 366.7L1437.4 364.7L1440.6 365L1443.8 369.1L1447 368.4L1450.2 363.5L1453.4 365.9L1456.6 363.1L1459.8 362.6L1463 365.7L1466.2 368.7L1469.4 365.5L1472.6 368.6L1475.8 363.5L1479 365.9L1482.2 365.8L1485.4 365.7L1488.6 367.5L1491.8 366.7L1495 364.4L1498.2 362.8L1501.4 364.4L1504.6 365.5L1507.8 364.4L1511 362.5L1514.2 362L1517.4 367.2L1520.6 366.1L1523.8 364.4L1527 366.5L1530.2 366.6L1533.4 365.2L1536.6 364.8L1539.8 368L1543 367.4L1546.2 368.6L1549.4 367.8L1552.6 366.3L1555.8 364.9L1559 365.1L1562.2 364.6L1565.4 366L1568.6 366.3L1571.8 368.2L1575 368.6L1578.2 365.9L1581.4 366.7L1584.6 363.6L1587.8 364.6L1591 363.8L1594.2 366.2L1597.4 364.9L1600.6 364.5L1603.8 365.9L1607 362.3L1610.2 365.8L1613.4 366.9L1616.6 368.5L1619.8 363.6L1623 365.1L1626.2 361.9L1629.4 368.6L1632.6 365.6L1635.8 366.4L1639 362.9L1642.2 365.5L1645.4 364.7L1648.6 363.5L1651.8 363.6L1655 364L1658.2 364.2L1661.4 362.4L1664.6 368.5L1667.8 365.8L1671 366.1L1674.2 366.1L1677.4 365.3L1680.6 365.6L1683.8 366.9L1687 365.2L1690.2 368.3L1693.4 365.3L1696.6 368L1699.8 363.9L1703 366.7L1706.2 367.9L1709.4 369.5L1712.6 370L1715.8 365.8L1719 366.8L1722.2 371.6L1725.4 368.2L1728.6 366.3L1731.8 371.9L1735 371.3L1738.2 368.2L1741.4 369.2L1744.6 372.1L1747.8 367.9L1751 366.9L1754.2 366.4L1757.4 369L1760.6 362.5L1763.8 366.3L1767 365.7L1770.2 366.3L1773.4 366.7L1776.6 365.3L1779.8 366.3L1783 365.9L1786.2 367.8L1789.4 360.5L1792.6 364.6L1795.8 365L1799 362.2L1802.2 367.5L1804 45L1804 648" fill="none" stroke="#d0d028" stroke-width="1.0" stroke-linejoin="miter" shape-rendering="crispEdges"/>
<path clip-path="url(#cTR)" d="M1813.8 648L1813.8 331L1814.9 297L1817 296.3L1822 307L1824.1 271.6L1826.2 294L1828.3 288.5L1830.5 302.7L1832.6 292.8L1834.7 315.4L1836.8 294.2L1840.4 304L1843.2 294.2L1844.6 324L1846.7 301.3L1848.8 333.8L1851 322.5L1853.1 342.3L1855.9 332.4L1858.7 348L1860.9 335.2L1863 350.8L1865.8 349.4L1870 350.8L1875 346L1877 350.4L1880.2 350.1L1883.4 351.8L1886.6 353.3L1889.8 351.4L1893 352.3L1896.2 352.9L1899.4 353.4L1902.6 350.6L1905.8 353.7L1909 353.2L1912.2 352.4L1915.4 352.7L1918.6 354L1921.8 352.9L1925 352.4L1928.2 355.9L1931.4 357.5L1934.6 355.4L1937.8 357.2L1941 354.8L1944.2 353.5L1947.4 352.4L1950.6 353.7L1953.8 358.1L1957 354.6L1960.2 351.3L1963.4 353.8L1966.6 351.9L1969.8 350.5L1973 349L1976.2 347.5L1979.4 347.3L1982.6 343.2L1985.8 343.6L1989 344.8L1992.2 346.6L1995.4 345.5L1998.6 347.9L2001.8 346.8L2005 341.3L2008.2 346.7L2011.4 348.2L2014.6 347.4L2017.8 343.8L2021 347.3L2024.2 346.5L2027.4 349L2030.6 350.7L2033.8 349.7L2037 346.5L2040.2 350.3L2043.4 348.8L2046.6 350.9L2049.8 348.4L2053 349.7L2056.2 349.5L2059.4 349.5L2062.6 353.2L2065.8 352.3L2069 351.7L2072.2 347.7L2075.4 348.5L2078.6 349.3L2081.8 349.7L2085 344.5L2088.2 348.9L2091.4 344.7L2094.6 344.5L2097.8 349L2101 345.7L2104.2 350.6L2107.4 358.9L2110.6 358.1L2113.8 354.7L2117 355.7L2120.2 355.6L2123.4 357.6L2126.6 357.5L2129.8 354.5L2133 347.9L2136.2 348.8L2139.4 346.5L2142.6 346.2L2145.8 343.8L2149 345.5L2152.2 343.5L2155.4 345.2L2158.6 349.9L2161.8 347.3L2165 346.9L2168.2 346.5L2171.4 345.6L2174.6 346.4L2177.8 348.5L2181 344.3L2184.2 345L2187.4 344.4L2190.6 345.5L2193.8 351.3L2197 349.8L2200.2 349.9L2203.4 343.3L2206.6 343.1L2209.8 347.8L2213 344.1L2216.2 346.6L2219.4 343.2L2222.6 348.3L2225.8 345.7L2229 345.2L2232.2 351.7L2235.4 346.3L2238.6 343.8L2241.8 344.2L2245 348.5L2248.2 344.2L2251.4 349.3L2254.6 343.8L2257.8 346.7L2261 344L2264.2 348.5L2267.4 348.9L2270.6 347.5L2273.8 346L2277 345.3L2280.2 346.3L2283.4 344.4L2286.6 345.7L2289.8 350.2L2293 347L2296.2 348.3L2299.4 351.5L2302.6 349.5L2305.8 349L2309 351.2L2312.2 350.1L2315.4 350L2318.6 349.7L2321.8 352.3L2325 352.9L2328.2 344.8L2331.4 353.6L2334.6 351.3L2337.8 349.2L2341 351.9L2344.2 347.8L2347.4 352L2350.6 354.4L2353.8 352L2357 348.6L2360.2 354.1L2363.4 353.3L2366.6 356.5L2369.8 355.3L2373 357.3L2376.2 353.4L2379.4 354.5L2382.6 353.8L2385.8 350.6L2389 351.9L2392.2 355.8L2395.4 348.9L2398.6 350.5L2401.8 348.8L2405 350.5L2408.2 347.1L2411.4 351.5L2414.6 348.3L2417.8 347.9L2421 347.3L2424.2 349L2427.4 346.2L2428.5 203L2428.5 45" fill="none" stroke="#d0d028" stroke-width="1.0" stroke-linejoin="miter" shape-rendering="crispEdges"/>
<path clip-path="url(#cTR)" d="M1335 362L1338.6 362L1342.2 363.5L1345.8 365.9L1349.4 362.8L1353 361.3L1356.6 361.9L1360.2 367.1L1363.8 362.9L1367.4 361.3L1371 363.1L1374.6 364.4L1378.2 364.4L1381.8 367.6L1385.4 363.6L1389 360.9L1392.6 367.1L1396.2 364.7L1399.8 364.8L1403.4 362.8L1407 362.1L1410.6 367.3L1414.2 361.1L1417.8 362.9L1421.4 361.8L1425 367L1428.6 364.7L1432.2 362.6L1435.8 365.4L1439.4 367.9L1443 362.1L1446.6 362.2L1450.2 364.7L1453.8 364.4L1457.4 361.6L1461 362.6L1464.6 363.8L1468.2 365.6L1471.8 360.9L1475.4 365.2L1479 364.8L1482.6 367.9L1486.2 359L1489.8 363.1L1493.4 362.9L1497 366.8L1500.6 361.3L1504.2 362.6L1507.8 364.3L1511.4 365L1515 364.8L1518.6 361.2L1522.2 367.8L1525.8 362.4L1529.4 364.8L1533 365.9L1536.6 363.2L1540.2 365L1543.8 360.8L1547.4 363.7L1551 362.9L1554.6 360.8L1558.2 362.6L1561.8 361.9L1565.4 366L1569 362.3L1572.6 360.8L1576.2 363.6L1579.8 363.4L1583.4 369.5L1587 367.9L1590.6 364.5L1594.2 362.5L1597.8 369L1601.4 364.8L1605 360.6L1608.6 365L1612.2 360.6L1615.8 366.8L1619.4 365L1623 361.7L1626.6 362.8L1630.2 359.5L1633.8 367.8L1637.4 364.3L1641 365.6L1644.6 366.9L1648.2 363.3L1651.8 362.9L1655.4 363.1L1659 364.8L1662.6 362.3L1666.2 363.4L1669.8 364.7L1673.4 364.4L1677 362.9L1680.6 361.8L1684.2 362.9L1687.8 365.5L1691.4 367L1695 366.6L1698.6 363.5L1702.2 365.8L1705.8 365.7L1709.4 368.6L1713 364.1L1716.6 368.8L1720.2 367.5L1723.8 366.8L1727.4 373L1731 372.1L1734.6 365.2L1738.2 369.3L1741.8 370.4L1745.4 370.3L1749 364.3L1752.6 367L1756.2 365.6L1759.8 362.6L1763.4 365.9L1767 362.9L1770.6 363.9L1774.2 361.7L1777.8 364.8L1781.4 364.8L1785 362.9L1788.6 361.7L1792.2 363.5L1795.8 363.9L1799.4 363.7L1803 362.7" fill="none" stroke="#8f8f22" stroke-width="1" stroke-linejoin="miter" shape-rendering="crispEdges" stroke-dasharray="4 2"/>
<path clip-path="url(#cTR)" d="M1811.8 45L1811.8 294L1814.9 227.7L1816.3 233L1819.1 257L1822 268.7L1824.1 226.3L1826.2 274L1829 266L1832.6 250.4L1834.7 264.5L1837.5 268.7L1842.5 273L1846 275.8L1848.8 297L1851.7 314L1855.9 319.7L1860.2 325.3L1865.8 339.5L1872.9 343.7L1877 347L1879 347.4L1882.6 348.9L1886.2 351.4L1889.8 347.4L1893.4 347.4L1897 352.3L1900.6 352.6L1904.2 354.2L1907.8 350.9L1911.4 353.6L1915 353.3L1918.6 353.2L1922.2 354.8L1925.8 354.2L1929.4 357.7L1933 355.5L1936.6 353L1940.2 355.5L1943.8 355.6L1947.4 350L1951 354.2L1954.6 353.4L1958.2 353.3L1961.8 350.3L1965.4 348.7L1969 352.6L1972.6 351.5L1976.2 350.5L1979.8 344.6L1983.4 342.9L1987 343.5L1990.6 344.5L1994.2 344.9L1997.8 343.5L2001.4 343.2L2005 343.2L2008.6 342.9L2012.2 346.3L2015.8 342.6L2019.4 349.5L2023 345.3L2026.6 342.5L2030.2 347.4L2033.8 347.2L2037.4 348.9L2041 348.6L2044.6 346.5L2048.2 349L2051.8 346.1L2055.4 348.3L2059 345.2L2062.6 347.1L2066.2 348.5L2069.8 347.1L2073.4 350.8L2077 353L2080.6 346.5L2084.2 345.4L2087.8 342.3L2091.4 345.4L2095 344.6L2098.6 345.3L2102.2 342.6L2105.8 351.1L2109.4 354.6L2113 358.2L2116.6 353.1L2120.2 356.1L2123.8 355.8L2127.4 354.5L2131 345.8L2134.6 346.6L2138.2 344.5L2141.8 347.7L2145.4 348.8L2149 342.4L2152.6 345.5L2156.2 344.2L2159.8 342.1L2163.4 342.9L2167 346.2L2170.6 348.2L2174.2 345.4L2177.8 347.3L2181.4 345.8L2185 347.1L2188.6 342.7L2192.2 341.9L2195.8 345.4L2199.4 341.4L2203 341.3L2206.6 343.3L2210.2 345.7L2213.8 343.3L2217.4 344.5L2221 342.8L2224.6 347.9L2228.2 343.4L2231.8 344.1L2235.4 343.9L2239 347.6L2242.6 346.9L2246.2 345.9L2249.8 343.3L2253.4 346.1L2257 348.9L2260.6 345.6L2264.2 341.9L2267.8 346.2L2271.4 345.2L2275 345.6L2278.6 346.5L2282.2 343.4L2285.8 347.7L2289.4 347.3L2293 349.6L2296.6 344.6L2300.2 346.7L2303.8 349.5L2307.4 348.5L2311 346.5L2314.6 348.6L2318.2 348.4L2321.8 347.3L2325.4 348.4L2329 351.9L2332.6 349.3L2336.2 348.9L2339.8 350.6L2343.4 346.5L2347 349L2350.6 351.3L2354.2 352L2357.8 350.8L2361.4 352.3L2365 350.1L2368.6 349.9L2372.2 353.1L2375.8 351.8L2379.4 349.1L2383 351L2386.6 350.3L2390.2 350L2393.8 347.4L2397.4 346.1L2401 344.8L2404.6 348.7L2408.2 351.5L2411.8 345.8L2415.4 349.1L2419 346.6L2422.6 345.8L2426.2 347.8" fill="none" stroke="#8f8f22" stroke-width="1" stroke-linejoin="miter" shape-rendering="crispEdges" stroke-dasharray="4 2"/>
<path clip-path="url(#cTR)" d="M1335 365.1L1338.6 367.3L1342.2 366.8L1345.8 366.8L1349.4 367.7L1353 368.4L1356.6 367.5L1360.2 367.5L1363.8 365L1367.4 368.5L1371 366.7L1374.6 369.4L1378.2 370.1L1381.8 364.3L1385.4 370.2L1389 366.3L1392.6 365.6L1396.2 367.3L1399.8 368.4L1403.4 369.8L1407 373.4L1410.6 364.8L1414.2 367L1417.8 368.5L1421.4 366.6L1425 364.2L1428.6 367.2L1432.2 367.6L1435.8 368.4L1439.4 366.8L1443 370.3L1446.6 368L1450.2 369.1L1453.8 365.5L1457.4 362.4L1461 369.1L1464.6 368.2L1468.2 368.9L1471.8 367.7L1475.4 366.8L1479 366.9L1482.6 369.4L1486.2 365.9L1489.8 366.8L1493.4 367.3L1497 368L1500.6 371.7L1504.2 366.3L1507.8 372.4L1511.4 367.7L1515 367.4L1518.6 366.6L1522.2 369.3L1525.8 370.8L1529.4 365.7L1533 367.3L1536.6 367L1540.2 366.5L1543.8 365.6L1547.4 368.5L1551 369.1L1554.6 368.2L1558.2 366.6L1561.8 368.1L1565.4 369.7L1569 368.6L1572.6 369.7L1576.2 367.4L1579.8 369.4L1583.4 369.1L1587 366.7L1590.6 367.6L1594.2 366.5L1597.8 368.2L1601.4 367.6L1605 368L1608.6 367.8L1612.2 366.7L1615.8 368.9L1619.4 365.7L1623 367.9L1626.6 363.3L1630.2 365.8L1633.8 369.3L1637.4 367.4L1641 368.4L1644.6 365.9L1648.2 364.8L1651.8 365.7L1655.4 367.8L1659 367L1662.6 371.3L1666.2 371.6L1669.8 369.5L1673.4 366.2L1677 368.1L1680.6 366.9L1684.2 366.7L1687.8 367.2L1691.4 367.9L1695 367.3L1698.6 367.7L1702.2 364.4L1705.8 367.4L1709.4 370.3L1713 370.5L1716.6 367.3L1720.2 370.8L1723.8 370.9L1727.4 368.7L1731 371.9L1734.6 373L1738.2 372.5L1741.8 375.8L1745.4 370.2L1749 371L1752.6 370.5L1756.2 369.7L1759.8 366.9L1763.4 368.7L1767 368.2L1770.6 372.2L1774.2 370.1L1777.8 367.3L1781.4 370L1785 365.3L1788.6 367.7L1792.2 370.3L1795.8 363.3L1799.4 369L1803 367.8" fill="none" stroke="#8f8f22" stroke-width="1" stroke-linejoin="miter" shape-rendering="crispEdges" stroke-dasharray="4 2"/>
<path clip-path="url(#cTR)" d="M1816.3 648L1817 370.6L1819.1 365L1822 331L1826.2 408.8L1830.5 349.4L1834 391.8L1836.1 319.7L1839.7 379L1843.2 349.4L1848.1 382L1851.7 345L1853.8 365L1858 376L1861.6 367.8L1864.4 350.8L1871.5 362L1875 355L1877 354L1879 352L1882.6 351.1L1886.2 355.5L1889.8 351.2L1893.4 350L1897 355L1900.6 355.6L1904.2 352.5L1907.8 353.7L1911.4 360.9L1915 353.8L1918.6 355.3L1922.2 359.1L1925.8 358.7L1929.4 360.9L1933 359.3L1936.6 356.8L1940.2 357.7L1943.8 356.2L1947.4 358.8L1951 358.1L1954.6 354.5L1958.2 357.8L1961.8 354.5L1965.4 355L1969 352.8L1972.6 352.8L1976.2 345.8L1979.8 350.6L1983.4 345.5L1987 349.9L1990.6 344.7L1994.2 345.5L1997.8 344.7L2001.4 346.6L2005 348.9L2008.6 347.9L2012.2 348.2L2015.8 349.3L2019.4 349.5L2023 350L2026.6 348.5L2030.2 349.9L2033.8 353.2L2037.4 352.6L2041 347.1L2044.6 350.2L2048.2 351.2L2051.8 349.9L2055.4 350L2059 351.6L2062.6 354.1L2066.2 354.6L2069.8 352.9L2073.4 353.8L2077 351.2L2080.6 351.5L2084.2 349.6L2087.8 346.2L2091.4 347.5L2095 349.6L2098.6 351.2L2102.2 349.5L2105.8 360L2109.4 360.7L2113 359L2116.6 358L2120.2 363.4L2123.8 358.4L2127.4 356.6L2131 352.1L2134.6 347.7L2138.2 350.1L2141.8 345.7L2145.4 350.7L2149 350.8L2152.6 348.1L2156.2 346.9L2159.8 349.1L2163.4 351.1L2167 347.5L2170.6 348.2L2174.2 350.8L2177.8 349.6L2181.4 348L2185 348.9L2188.6 348.5L2192.2 347.2L2195.8 347.6L2199.4 342.5L2203 348.1L2206.6 349.6L2210.2 349.2L2213.8 346.9L2217.4 351.2L2221 350.6L2224.6 346.2L2228.2 347.8L2231.8 346.9L2235.4 346.2L2239 349.9L2242.6 349.9L2246.2 346.6L2249.8 347.8L2253.4 349L2257 347.6L2260.6 350.3L2264.2 349.1L2267.8 349.2L2271.4 345.6L2275 351.1L2278.6 344.2L2282.2 348.9L2285.8 351.6L2289.4 349.9L2293 348.5L2296.6 349.6L2300.2 348.3L2303.8 353.4L2307.4 351.8L2311 349.2L2314.6 354.8L2318.2 350.2L2321.8 352.1L2325.4 347.7L2329 351.4L2332.6 352.9L2336.2 351.9L2339.8 350.2L2343.4 354.6L2347 351L2350.6 356.6L2354.2 354.3L2357.8 355.2L2361.4 356.5L2365 356.4L2368.6 359.4L2372.2 355.6L2375.8 351.9L2379.4 355.5L2383 352.3L2386.6 352.5L2390.2 351.9L2393.8 352.2L2397.4 353.8L2401 350.9L2404.6 349.8L2408.2 348.8L2411.8 348.8L2415.4 349.3L2419 350.5L2422.6 350.2L2426.2 351.4" fill="none" stroke="#8f8f22" stroke-width="1" stroke-linejoin="miter" shape-rendering="crispEdges" stroke-dasharray="4 2"/>
<path clip-path="url(#cTR)" d="M1808.8 45L1808.8 648" fill="none" stroke="#d0d028" stroke-width="1.6" stroke-linejoin="miter" shape-rendering="crispEdges"/>
<line clip-path="url(#cTR)" x1="1806.5" y1="45" x2="1806.5" y2="648" stroke="#9a6ccb" stroke-width="1" stroke-dasharray="3 2"/>
<line clip-path="url(#cTR)" x1="2427.8" y1="45" x2="2427.8" y2="648" stroke="#8f8f22" stroke-width="1" stroke-dasharray="4 2"/>
<line clip-path="url(#cTR)" x1="2428.5" y1="203" x2="2428.5" y2="648" stroke="#d0d028" stroke-width="1.0"/>
<line clip-path="url(#cTR)" x1="2431" y1="45" x2="2431" y2="455" stroke="#d0d028" stroke-width="2"/>
<line clip-path="url(#cTR)" x1="2430.5" y1="455" x2="2430.5" y2="648" stroke="#d0d028" stroke-width="1"/>
<line clip-path="url(#cTR)" x1="2435.2" y1="73" x2="2435.2" y2="648" stroke="#8a66b8" stroke-width="1" stroke-dasharray="4 2"/>
<line clip-path="url(#cTR)" x1="2435.5" y1="555" x2="2435.5" y2="648" stroke="#d0d028" stroke-width="1"/>
<line clip-path="url(#cTR)" x1="2438.5" y1="45" x2="2438.5" y2="648" stroke="#8a66b8" stroke-width="1" stroke-dasharray="4 2"/>
<line clip-path="url(#cTR)" x1="2445.4" y1="45" x2="2445.4" y2="648" stroke="#8a66b8" stroke-width="1" stroke-dasharray="4 2"/>
<line clip-path="url(#cTR)" x1="2446.5" y1="110" x2="2446.5" y2="648" stroke="#8a66b8" stroke-width="1" stroke-dasharray="4 2"/>
<line clip-path="url(#cTR)" x1="2452.5" y1="45" x2="2452.5" y2="648" stroke="#8a66b8" stroke-width="1" stroke-dasharray="4 2"/>
<line clip-path="url(#cTR)" x1="2454.4" y1="45" x2="2454.4" y2="648" stroke="#8f8f22" stroke-width="1" stroke-dasharray="4 2"/>
<line clip-path="url(#cTR)" x1="2456.4" y1="45" x2="2456.4" y2="648" stroke="#8a66b8" stroke-width="1" stroke-dasharray="4 2"/>
<line clip-path="url(#cTR)" x1="2457.1" y1="45" x2="2457.1" y2="96.5" stroke="#d0d028" stroke-width="1.6"/>
<line clip-path="url(#cTR)" x1="2457.5" y1="96.5" x2="2457.5" y2="648" stroke="#8f8f22" stroke-width="1" stroke-dasharray="4 2"/>
<line clip-path="url(#cTR)" x1="2460.4" y1="45" x2="2460.4" y2="648" stroke="#8a66b8" stroke-width="1" stroke-dasharray="4 2"/>
<line clip-path="url(#cTR)" x1="2469.5" y1="45" x2="2469.5" y2="121.6" stroke="#8a66b8" stroke-width="1" stroke-dasharray="4 2"/>
<line clip-path="url(#cTR)" x1="2487.8" y1="45" x2="2487.8" y2="78.5" stroke="#d0d028" stroke-width="2"/>
<line clip-path="url(#cTR)" x1="2487.5" y1="78.5" x2="2487.5" y2="490" stroke="#d0d028" stroke-width="1"/>
<line clip-path="url(#cTR)" x1="2494.3" y1="45" x2="2494.3" y2="648" stroke="#8f8f22" stroke-width="1" stroke-dasharray="4 2"/>
<line clip-path="url(#cTR)" x1="2496.5" y1="45" x2="2496.5" y2="648" stroke="#8f8f22" stroke-width="1" stroke-dasharray="4 2"/>
<line clip-path="url(#cTR)" x1="2499.9" y1="45" x2="2499.9" y2="648" stroke="#8a66b8" stroke-width="1" stroke-dasharray="4 2"/>
<line clip-path="url(#cTR)" x1="2501.3" y1="45" x2="2501.3" y2="648" stroke="#9a6ccb" stroke-width="1"/>
<line clip-path="url(#cTR)" x1="2504.5" y1="45" x2="2504.5" y2="648" stroke="#9a6ccb" stroke-width="1"/>
<line clip-path="url(#cTR)" x1="2505.9" y1="45" x2="2505.9" y2="648" stroke="#8f8f22" stroke-width="1" stroke-dasharray="4 2"/>
<line clip-path="url(#cTR)" x1="2508" y1="45" x2="2508" y2="648" stroke="#9a6ccb" stroke-width="1.3"/>
<line clip-path="url(#cTR)" x1="2509.7" y1="45" x2="2509.7" y2="648" stroke="#8f8f22" stroke-width="1" stroke-dasharray="4 2"/>
<line clip-path="url(#cTR)" x1="2512.2" y1="45" x2="2512.2" y2="648" stroke="#8a66b8" stroke-width="1" stroke-dasharray="4 2"/>
<line clip-path="url(#cTR)" x1="2515.4" y1="45" x2="2515.4" y2="648" stroke="#8f8f22" stroke-width="1" stroke-dasharray="4 2"/>
<line clip-path="url(#cTR)" x1="2517.5" y1="45" x2="2517.5" y2="648" stroke="#8f8f22" stroke-width="1" stroke-dasharray="4 2"/>
<line clip-path="url(#cTR)" x1="2528.5" y1="45" x2="2528.5" y2="648" stroke="#8a66b8" stroke-width="1" stroke-dasharray="4 2"/>
<line clip-path="url(#cTR)" x1="2530" y1="45" x2="2530" y2="648" stroke="#d0d028" stroke-width="2"/>
<line clip-path="url(#cTR)" x1="2536.5" y1="45" x2="2536.5" y2="557" stroke="#d0d028" stroke-width="1.5"/>
<line clip-path="url(#cTR)" x1="2536.5" y1="557" x2="2536.5" y2="648" stroke="#d0d028" stroke-width="1"/>
<line clip-path="url(#cTR)" x1="2537.7" y1="45" x2="2537.7" y2="648" stroke="#8f8f22" stroke-width="1" stroke-dasharray="4 2"/>
<line clip-path="url(#cTR)" x1="2538.7" y1="45" x2="2538.7" y2="648" stroke="#d0d028" stroke-width="1"/>
<path clip-path="url(#cBL)" d="M58 930.5 L922.5 930.5 L922.5 978 L923.5 980 L923.5 1026 L924.5 1028 L924.5 1037 L925.5 1038 L925.5 1047.5 L1270 1047.5" fill="none" stroke="#f08018" stroke-width="1"/>
<path clip-path="url(#cBL)" d="M924.5 931 L924.5 978 M925.5 980 L925.5 1030 M923.5 1037 L923.5 1047" fill="none" stroke="#f08018" stroke-width="1" stroke-dasharray="3 2" stroke-opacity="0.8"/>
<path clip-path="url(#cBR)" d="M1328 833.7L1329.5 837.3L1331 851.4L1332.5 848.2L1334 851.1L1335.5 866.4L1337 869.3L1338.5 857.4L1340 854.3L1341.5 862.9L1343 843L1344.5 840.4L1346 842.4L1347.5 836L1349 841.2L1350.5 843.1L1352 843.2L1353.5 850.4L1355 852.8L1356.5 861.2L1358 861.7L1359.5 856.4L1361 865L1362.5 861.4L1364 866.7L1365.5 865.7L1367 867.6L1368.5 855.3L1370 866.7L1371.5 858.4L1373 868L1374.5 866L1376 881.6L1377.5 893.7L1379 910.4L1380.5 919.6L1382 908.4L1383.5 899.5L1385 891.8L1386.5 882L1388 873.9L1389.5 861.9L1391 855.6L1392.5 860.3L1394 862L1395.5 853.7L1397 862.8L1398.5 867.5L1400 867.6L1401.5 870.2L1403 871.5L1404.5 872.5L1406 869.6L1407.5 862.3L1409 862.3L1410.5 855.3L1412 854.1L1413.5 848.5L1415 848L1416.5 859.2L1418 871.2L1419.5 882.1L1421 886.5L1422.5 892.6L1424 885L1425.5 878.5L1427 873.5L1428.5 881.4L1430 867.6L1431.5 854.8L1433 851.8L1434.5 842L1436 847.1L1437.5 839L1439 849.3L1440.5 850.1L1442 846.8L1443.5 849.1L1445 858.2L1446.5 867.1L1448 864.8L1449.5 866.4L1451 866.3L1452.5 858.6L1454 850.2L1455.5 848L1457 848.9L1458.5 848L1460 850.6L1461.5 841.9L1463 854.6L1464.5 857.6L1466 855.2L1467.5 849.2L1469 856.1L1470.5 853.4L1472 843.1L1473.5 844.7L1475 847.2L1476.5 856.1L1478 874.2L1479.5 884.6L1481 888.3L1482.5 901L1484 913.8L1485.5 912.3L1487 905L1488.5 890.2L1490 877.9L1491.5 858L1493 856.6L1494.5 836.8L1496 842.2L1497.5 843.5L1499 836.1L1500.5 829.1L1502 828.8L1503.5 834.8L1505 854.1L1506.5 860.1L1508 864L1509.5 884.2L1511 884.1L1512.5 896.2L1514 881.2L1515.5 882.4L1517 879.2L1518.5 871.1L1520 861.5L1521.5 862.9L1523 848.4L1524.5 852.2L1526 844.9L1527.5 848.4L1529 853.2L1530.5 856.4L1532 865.8L1533.5 861.6L1535 858.3L1536.5 869.8L1538 868.3L1539.5 874.1L1541 877.9L1542.5 881.4L1544 882.2L1545.5 874L1547 868.1L1548.5 862.8L1550 859.2L1551.5 857.6L1553 858L1554.5 855.1L1556 855.4L1557.5 841.3L1559 850.5L1560.5 847.8L1562 835.9L1563.5 852.2L1565 850.1L1566.5 846.7L1568 856.1L1569.5 852.4L1571 858.8L1572.5 861.1L1574 858.9L1575.5 854L1577 844.7L1578.5 832.2L1580 833.8L1581.5 842.1L1583 850.8L1584.5 855L1586 856.9L1587.5 866.4L1589 869.1L1590.5 871.8L1592 863.2L1593.5 868.6L1595 870.6L1596.5 861.5L1598 869L1599.5 853L1601 864L1602.5 854.6L1604 856.1L1605.5 856.5L1607 855.8L1608.5 843.9L1610 849.9L1611.5 839.8L1613 851.6L1614.5 857.2L1616 867L1617.5 868.8L1619 878.9L1620.5 882.8L1622 892.2L1623.5 892.1L1625 888.4L1626.5 882.3L1628 884.6L1629.5 879.2L1631 879L1632.5 872.6L1634 867.4L1635.5 868.7L1637 869.6L1638.5 862.2L1640 862.6L1641.5 856.1L1643 868.4L1644.5 868.2L1646 869.7L1647.5 887.4L1649 885.1L1650.5 902.6L1652 901.1L1653.5 896.7L1655 893L1656.5 894.5L1658 884.9L1659.5 884.8L1661 872.8L1662.5 877.9L1664 877L1665.5 879L1667 894L1668.5 877.3L1670 888L1671.5 880.6L1673 891.3L1674.5 894.6L1676 902.6L1677.5 911.2L1679 911.9L1680.5 925.2L1682 925.2L1683.5 928.1L1685 897.3L1686.5 874.5L1688 850.6L1689.5 844.1L1691 850.1L1692.5 859.4L1694 848.5L1695.5 847.3L1697 851.1L1698.5 853.9L1700 852.5L1701.5 868L1703 856.1L1704.5 864.9L1706 861.6L1707.5 873.1L1709 878.9L1710.5 870L1712 870L1713.5 863.4L1715 869.3L1716.5 862.6L1718 857.2L1719.5 860.3L1721 868.5L1722.5 867L1724 873.8L1725.5 870.9L1727 881L1728.5 884.9L1730 874.8L1731.5 878.8L1733 867.7L1734.5 864.5L1736 862L1737.5 863.1L1739 857.8L1740.5 860.4L1742 840.6L1743.5 847.4L1745 851.6L1746.5 840L1748 845.9L1749.5 835.8L1751 844.8L1752.5 822.2L1754 835.1L1755.5 838.4L1757 839.4L1758.5 830.3L1760 843.1L1761.5 831.7L1763 843.6L1764.5 850.4L1766 851.2L1767.5 851.7L1769 854.2L1770.5 856.8L1772 851.1L1773.5 852.3L1775 862.9L1776.5 865.2L1778 866.4L1779.5 870.6L1781 875.9L1782.5 869.8L1784 863.3L1785.5 864.6L1787 860.2L1788.5 855.4L1790 854.8L1791.5 846.9L1793 847.4L1794.5 844.7L1796 841L1797.5 851.6L1799 864.3L1800.5 878.4L1802 896L1803.5 905.7L1805 910.1L1806.5 925.1L1808 917.9L1809.5 910.8L1811 897L1812.5 885.5L1814 869.2L1815.5 858.5L1817 839L1818.5 825.7L1820 803.5L1821.5 792.8L1823 776.1L1824.5 767.7L1826 750L1827.5 752.3L1829 756.7L1830.5 764.1L1832 765.7L1833.5 773.3L1835 783.2L1836.5 776.4L1838 775.6L1839.5 788.9L1841 799.8L1842.5 812.4L1844 811.1L1845.5 835.2L1847 844.5L1848.5 859.2L1850 878L1851.5 894.1L1853 910.9L1854.5 921.7L1856 929.3L1857.5 919L1859 918.5L1860.5 910.1L1862 909L1863.5 899.3L1865 891.2L1866.5 889L1868 886.6L1869.5 881.4L1871 884.7L1872.5 871.9L1874 867.7L1875.5 867.6L1877 859.2L1878.5 860.6L1880 854.4L1881.5 852L1883 847.2L1884.5 850.3L1886 853L1887.5 862.6L1889 864.8L1890.5 869.9L1892 880.9L1893.5 890.3L1895 889.8L1896.5 896.1L1898 899L1899.5 899.1L1901 892.6L1902.5 892.8L1904 888.1L1905.5 890.3L1907 885L1908.5 878.2L1910 878L1911.5 877.1L1913 875.7L1914.5 873.2L1916 861.1L1917.5 862.4L1919 857.7L1920.5 862.1L1922 856.9L1923.5 845.5L1925 843.4L1926.5 839.9L1928 834.6L1929.5 835.4L1931 829.1L1932.5 828.3L1934 835.2L1935.5 838.7L1937 836.5L1938.5 843.5L1940 850.8L1941.5 846.8L1943 854.6L1944.5 852.1L1946 843.4L1947.5 847.7L1949 843.7L1950.5 833.3L1952 838.2L1953.5 842.7L1955 838.2L1956.5 844.8L1958 856.6L1959.5 863.3L1961 870.5L1962.5 871.5L1964 881.8L1965.5 888.4L1967 894.4L1968.5 897.1L1970 908.6L1971.5 918.9L1973 915.4L1974.5 933.6L1976 914.6L1977.5 902.4L1979 890.9L1980.5 872.1L1982 853.8L1983.5 852.1L1985 828L1986.5 824.7L1988 808.7L1989.5 786.9L1991 780.2L1992.5 759.7L1994 751.1L1995.5 739.9L1997 754.5L1998.5 759.1L2000 769.7L2001.5 774.1L2003 754.6L2004.5 756.9L2006 747L2007.5 765.8L2009 774L2010.5 797L2012 815.4L2013.5 825.7L2015 844.9L2016.5 862.7L2018 872.3L2019.5 887.4L2021 903.3L2022.5 917.7L2024 933.5L2025.5 936.4L2027 936.7L2028.5 923.6L2030 916.3L2031.5 909.3L2033 904.5L2034.5 903.8L2036 887.1L2037.5 880.6L2039 871.6L2040.5 865.5L2042 861.7L2043.5 853.2L2045 852.1L2046.5 857.4L2048 862.5L2049.5 864L2051 866.1L2052.5 874.1L2054 881L2055.5 877.7L2057 889.3L2058.5 878.1L2060 867.8L2061.5 865.5L2063 854.2L2064.5 851.4L2066 859.1L2067.5 862.8L2069 875.1L2070.5 879L2072 895.8L2073.5 895.4L2075 897.6L2076.5 900.1L2078 897.4L2079.5 892L2081 902.3L2082.5 900L2084 901.5L2085.5 907.1L2087 906.9L2088.5 903.1L2090 901.9L2091.5 904.4L2093 897.2L2094.5 904.1L2096 913.1L2097.5 904.4L2099 910.9L2100.5 914.6L2102 914.9L2103.5 912.1L2105 890.1L2106.5 871.6L2108 858.4L2109.5 853.9L2111 857.7L2112.5 856.4L2114 858.2L2115.5 856.6L2117 858.6L2118.5 856.2L2120 853.9L2121.5 857.3L2123 855.7L2124.5 862.2L2126 857.8L2127.5 865.4L2129 864L2130.5 881.3L2132 870.7L2133.5 876.8L2135 870.2L2136.5 863.5L2138 864.7L2139.5 859.5L2141 877L2142.5 877.6L2144 885.7L2145.5 884.3L2147 884.4L2148.5 875.1L2150 871.5L2151.5 865L2153 860.5L2154.5 857.6L2156 865.9L2157.5 874.2L2159 880.8L2160.5 878.9L2162 874.3L2163.5 869.5L2165 863.5L2166.5 864.8L2168 863L2169.5 851.8L2171 852.6L2172.5 849.1L2174 872.5L2175.5 875.6L2177 866.6L2178.5 883.4L2180 879.2L2181.5 879.5L2183 874.7L2184.5 881.6L2186 872.8L2187.5 877.9L2189 879.9L2190.5 871L2192 862.3L2193.5 870.1L2195 857.3L2196.5 860.9L2198 857.6L2199.5 859.9L2201 851.8L2202.5 851.2L2204 843.1L2205.5 851.1L2207 850.7L2208.5 846.1L2210 863.5L2211.5 873.2L2213 874.4L2214.5 878.1L2216 877L2217.5 870.5L2219 867.7L2220.5 865.9L2222 878.8L2223.5 880L2225 862.8L2226.5 853.2L2228 853.6L2229.5 840.7L2231 851.6L2232.5 846.7L2234 855.1L2235.5 858L2237 863.3L2238.5 868.7L2240 869.1L2241.5 856.2L2243 857.8L2244.5 844.3L2246 842L2247.5 844L2249 841.2L2250.5 847.3L2252 844.7L2253.5 839.6L2255 840.5L2256.5 845.8L2258 851L2259.5 853.2L2261 857.4L2262.5 861.9L2264 865.2L2265.5 869.5L2267 881.6L2268.5 878.6L2270 867.5L2271.5 870.1L2273 860.1L2274.5 846.1L2276 847.4L2277.5 853.2L2279 853.6L2280.5 853.5L2282 856.9L2283.5 858.5L2285 872.2L2286.5 871.5L2288 874.9L2289.5 880.1L2291 876L2292.5 875.1L2294 868.4L2295.5 862.7L2297 850.2L2298.5 850.2L2300 845.3L2301.5 845.6L2303 850.1L2304.5 846L2306 854.2L2307.5 861.6L2309 861.7L2310.5 868L2312 878.6L2313.5 885.9L2315 864.5L2316.5 867L2318 865.7L2319.5 862.9L2321 860L2322.5 852.2L2324 855.1L2325.5 840.6L2327 842.2L2328.5 841.5L2330 845.7L2331.5 855.3L2333 859.5L2334.5 844.9L2336 846.8L2337.5 841.9L2339 837.7L2340.5 838.9L2342 847.3L2343.5 845.5L2345 845.6L2346.5 843.3L2348 839.9L2349.5 833.9L2351 834.9L2352.5 835.7L2354 853.4L2355.5 853.1L2357 856.9L2358.5 867.2L2360 870.7L2361.5 864.4L2363 854.3L2364.5 854.5L2366 833.9L2367.5 843.4L2369 857.5L2370.5 873.7L2372 868.2L2373.5 870.9L2375 868.4L2376.5 867.1L2378 865.7L2379.5 856.6L2381 856.1L2382.5 859.6L2384 853.5L2385.5 854.8L2387 848.9L2388.5 843.6L2390 847.1L2391.5 851.7L2393 859.3L2394.5 858.3L2396 852.3L2397.5 855.2L2399 846.1L2400.5 846.3L2402 838.9L2403.5 851.9L2405 855L2406.5 866.2L2408 885.6L2409.5 876.2L2411 869.5L2412.5 843.9L2414 858.2L2415.5 864.5L2417 864.1L2418.5 853.8L2420 849.4L2421.5 854.4L2423 863.2L2424.5 863.2L2426 863.4L2427.5 858L2429 862.4L2430.5 858.1L2432 860L2433.5 868.5L2435 869.9L2436.5 870L2438 873.6L2439.5 880.2L2441 888.2L2442.5 893L2444 892.3L2445.5 876.9L2447 860.5L2448.5 846.8L2450 860.8L2451.5 855.8L2453 858L2454.5 851.8L2456 860.9L2457.5 842.1L2459 848.5L2460.5 847.9L2462 847.8L2463.5 838.1L2465 845.1L2466.5 854L2468 858.9L2469.5 938.4L2471 1096L2472.5 1230.4L2474 1163.2L2475.5 1078.1L2477 1019.8L2478.5 988.2L2480 1000.2L2481.5 1044.4L2483 1044.3L2484.5 1037.5L2486 990.4L2487.5 969.1L2489 932.1L2490.5 908.4L2492 860.5L2493.5 922L2495 959.7L2496.5 1002.6L2498 1064.8L2499.5 1123.6L2501 1145.4L2502.5 1084.6L2504 1036.6L2505.5 975.2L2507 959.3L2508.5 1026.7L2510 1155.8L2511.5 1123.6L2513 1131L2514.5 1120.5L2516 1121.1L2517.5 1122.6L2519 1089.7L2520.5 1079.3L2522 1050.2L2523.5 1030.9L2525 1042.4L2526.5 1081.5L2528 1080.9L2529.5 1064.3L2531 1095.3L2532.5 1067.2L2534 1052.5L2535.5 1051L2537 1036.7L2538.5 1026.9" fill="none" stroke="#e33131" stroke-width="1.0" stroke-linejoin="miter" shape-rendering="crispEdges"/>
<path clip-path="url(#cBR)" d="M1328 825.4L1330 831.5L1332 833.3L1334 840.9L1336 853.6L1338 861.1L1340 853.3L1342 831.2L1344 832.5L1346 828.6L1348 831.8L1350 822.5L1352 825.3L1354 839L1356 845.2L1358 836.7L1360 854.1L1362 847.7L1364 855.6L1366 860.1L1368 847.1L1370 865.5L1372 844.5L1374 860.3L1376 865.5L1378 875.4L1380 905.1L1382 898.8L1384 881.6L1386 883.3L1388 863L1390 859L1392 850.4L1394 857.1L1396 845.5L1398 852.5L1400 861.6L1402 866.9L1404 860.7L1406 865.6L1408 844.2L1410 844.2L1412 838.5L1414 837.5L1416 845.9L1418 851L1420 869.7L1422 859.3L1424 868.1L1426 875.9L1428 863.9L1430 857.9L1432 837L1434 847.8L1436 823.4L1438 837.5L1440 825.1L1442 830.2L1444 852.2L1446 835.9L1448 843.1L1450 855.7L1452 836.1L1454 845L1456 838.1L1458 833.9L1460 831L1462 839.7L1464 836.5L1466 839.8L1468 833.5L1470 843.9L1472 833.1L1474 843.1L1476 826.6L1478 845.7L1480 856.1L1482 880.3L1484 900.4L1486 911.2L1488 908.3L1490 882.3L1492 847.3L1494 846.4L1496 843.9L1498 836.4L1500 826.4L1502 822.5L1504 823.6L1506 819.1L1508 839.9L1510 864.5L1512 882.5L1514 876.4L1516 870.4L1518 871L1520 863.1L1522 849.7L1524 836.4L1526 842.4L1528 843.5L1530 827L1532 830.4L1534 852.3L1536 853.5L1538 849L1540 859.7L1542 868.4L1544 879.1L1546 869.9L1548 865.3L1550 861L1552 851.3L1554 847.1L1556 842.7L1558 846.4L1560 832.6L1562 822L1564 843.6L1566 843.9L1568 862.4L1570 852.1L1572 845.1L1574 843.4L1576 858.6L1578 843.3L1580 816.8L1582 820.2L1584 833.8L1586 853.1L1588 847.2L1590 841.5L1592 866.5L1594 846L1596 854.1L1598 839.4L1600 848.2L1602 850.5L1604 831.8L1606 836.3L1608 845.7L1610 835.5L1612 843.8L1614 832L1616 836.9L1618 846.8L1620 871.5L1622 885.2L1624 881.7L1626 883.2L1628 879.3L1630 856L1632 856L1634 859.1L1636 858.6L1638 855.9L1640 851.1L1642 844.2L1644 851.9L1646 860.7L1648 866.1L1650 882.7L1652 883.7L1654 893.3L1656 889.9L1658 875.5L1660 887.8L1662 859.2L1664 867.6L1666 853.6L1668 867.4L1670 863.3L1672 869.4L1674 894.8L1676 884.4L1678 898L1680 898.8L1682 926.2L1684 944.5L1686 887.8L1688 850.1L1690 825.2L1692 845.1L1694 835.2L1696 818.9L1698 828L1700 843L1702 843.1L1704 861L1706 853.9L1708 853.2L1710 855.2L1712 854.2L1714 847.1L1716 850.8L1718 856.2L1720 840.7L1722 849.5L1724 859.7L1726 874.6L1728 870.2L1730 873.1L1732 872.9L1734 863.3L1736 858.6L1738 849.1L1740 859.3L1742 845.9L1744 833.9L1746 840.7L1748 833L1750 814.1L1752 825.9L1754 813.7L1756 816.8L1758 828.8L1760 833.4L1762 834L1764 833.1L1766 845.5L1768 827.4L1770 853.3L1772 850.6L1774 841.2L1776 836.5L1778 855.2L1780 857.7L1782 854.2L1784 853.1L1786 859.8L1788 855.1L1790 844.7L1792 845.6L1794 836.6L1796 819.9L1798 823.8L1800 851.1L1802 862.9L1804 883.4L1806 904.1L1808 904.6L1810 900.1L1812 895.5L1814 871.9L1816 854.3L1818 835.2L1820 842.4L1822 793.4L1824 774.5L1826 750.5L1828 739.8L1830 743L1832 763.8L1834 765.7L1836 751.9L1838 749.2L1840 780.5L1842 792.1L1844 791.5L1846 805.9L1848 827.8L1850 842.9L1852 862L1854 897.3L1856 925L1858 920.1L1860 920.9L1862 903.4L1864 886.1L1866 890.6L1868 878.1L1870 868.4L1872 876.6L1874 870.3L1876 852.2L1878 849.8L1880 848.3L1882 829.2L1884 835.7L1886 828.3L1888 844.7L1890 846.5L1892 867.3L1894 853.2L1896 897.2L1898 869.5L1900 905.2L1902 886.1L1904 875.7L1906 901.7L1908 870.7L1910 870.4L1912 853L1914 855.3L1916 851.4L1918 856.9L1920 851.9L1922 855.1L1924 837.8L1926 833.4L1928 813.9L1930 835L1932 814.3L1934 812.1L1936 843.3L1938 826.4L1940 825.6L1942 834L1944 833.5L1946 830.6L1948 840.3L1950 832.2L1952 843.3L1954 832.5L1956 833.3L1958 818.1L1960 837.1L1962 856.5L1964 860.2L1966 872.1L1968 882.8L1970 898.9L1972 902L1974 909.5L1976 907.2L1978 900.2L1980 884.5L1982 861.5L1984 837L1986 819.8L1988 817.7L1990 791.4L1992 768.5L1994 752.6L1996 735.6L1998 743.1L2000 757.2L2002 745.7L2004 748L2006 747.8L2008 749.5L2010 762.4L2012 793.2L2014 807.8L2016 828.9L2018 840.3L2020 877.8L2022 901.6L2024 909.3L2026 936.1L2028 918.4L2030 911.9L2032 892L2034 887.2L2036 886.6L2038 864L2040 875.5L2042 865.2L2044 845.6L2046 849.7L2048 840.6L2050 844.7L2052 844.4L2054 867L2056 866.7L2058 892.8L2060 877.6L2062 857.3L2064 845.2L2066 844.2L2068 839.8L2070 865.7L2072 890.6L2074 878.9L2076 875.4L2078 889L2080 881.5L2082 888.2L2084 888L2086 886.5L2088 892.1L2090 890.2L2092 904.2L2094 884.8L2096 912L2098 897.1L2100 920.5L2102 903.3L2104 903.4L2106 897.8L2108 852.2L2110 830.8L2112 833.3L2114 848.7L2116 843.9L2118 857.5L2120 844.2L2122 841.7L2124 869.7L2126 854.2L2128 836.5L2130 858.3L2132 861.9L2134 873L2136 871.4L2138 852.3L2140 828.8L2142 861.2L2144 872.6L2146 872.8L2148 863.4L2150 857.5L2152 845.2L2154 841.8L2156 847L2158 862.8L2160 867.8L2162 867.9L2164 862L2166 857.5L2168 858.2L2170 851.9L2172 838.2L2174 847.3L2176 857.7L2178 856.9L2180 842.4L2182 883.4L2184 878.8L2186 876L2188 876.8L2190 868.2L2192 868.9L2194 858.7L2196 839L2198 842.2L2200 850.9L2202 854.9L2204 831.2L2206 852L2208 841.5L2210 830L2212 855.8L2214 862.7L2216 889.6L2218 866.9L2220 859L2222 875.5L2224 885.6L2226 859.9L2228 844.8L2230 838.5L2232 840.1L2234 838.3L2236 844.8L2238 860.3L2240 868.5L2242 852.2L2244 839.9L2246 835L2248 832.9L2250 840.6L2252 831.2L2254 825.9L2256 840.9L2258 845.7L2260 831.6L2262 857L2264 858.3L2266 855.2L2268 862.3L2270 868.1L2272 863.4L2274 855.5L2276 841.3L2278 841L2280 832.1L2282 831.7L2284 866.2L2286 851.1L2288 853.4L2290 868.5L2292 856.3L2294 877.1L2296 854.7L2298 839.2L2300 828.4L2302 829.3L2304 818.7L2306 841.7L2308 847.5L2310 856.6L2312 863.6L2314 870.7L2316 870.5L2318 850.9L2320 864.1L2322 847.7L2324 841.6L2326 831.1L2328 818.8L2330 838.3L2332 839.9L2334 840.8L2336 831.4L2338 813.6L2340 822.9L2342 826.5L2344 834.1L2346 840.7L2348 819.7L2350 810.8L2352 832.7L2354 828.7L2356 830.5L2358 846.1L2360 844.1L2362 856.6L2364 864.7L2366 838.8L2368 816.6L2370 844.2L2372 860.4L2374 881.2L2376 869.9L2378 858.4L2380 858.2L2382 837.4L2384 847.1L2386 834.2L2388 835.2L2390 833.7L2392 849.2L2394 822.2L2396 852L2398 849.8L2400 828.6L2402 834.1L2404 820.4L2406 860.8L2408 855.1L2410 897.9L2412 876L2414 823.5L2416 841.3L2418 843.5L2420 835.8L2422 843L2424 858.1L2426 852.7L2428 852.6L2430 843.3L2432 846.2L2434 840.4L2436 860.4L2438 871.7L2440 859.1L2442 866.1L2444 868.1L2446 873.1L2448 826.5L2450 839.4L2452 838.7L2454 855.4L2456 864.6L2458 849.3L2460 840.5L2462 847.5L2464 841.5L2466 821.2L2468 836.6L2470 897L2472 1014.6L2474 1211.1L2476 1114.7L2478 1038.4L2480 948.7L2482 1002.3L2484 1030.3L2486 1011.7L2488 983.7L2490 998.9L2492 920.3L2494 831.6L2496 933.1L2498 999.2L2500 1069.7L2502 1171.1L2504 1058.8L2506 1048.2L2508 906.2L2510 1003.2L2512 1067.7L2514 1156.3L2516 1157L2518 1068L2520 1119.1L2522 1093.1L2524 1000.5L2526 1043.4L2528 1025.9L2530 1034.2L2532 1045.2L2534 1031.7L2536 986L2538 1016" fill="none" stroke="#9c2222" stroke-width="1" stroke-linejoin="miter" shape-rendering="crispEdges" stroke-dasharray="3 2"/>
<path clip-path="url(#cBR)" d="M1328 843.5L1330 859.7L1332 872.7L1334 859.6L1336 862.8L1338 860.5L1340 871.8L1342 866.5L1344 853.1L1346 848L1348 842L1350 843.6L1352 865.2L1354 874.4L1356 869.3L1358 854.6L1360 876.9L1362 877.9L1364 871.4L1366 884.3L1368 889.1L1370 882.7L1372 875.2L1374 885.1L1376 912.3L1378 913.1L1380 928.7L1382 917.4L1384 899.9L1386 896.5L1388 871.5L1390 871.5L1392 871.8L1394 870.9L1396 882.3L1398 873.8L1400 880.8L1402 867.5L1404 877.8L1406 878.4L1408 875.1L1410 868.3L1412 866.3L1414 876L1416 864.7L1418 884.9L1420 889.6L1422 889.6L1424 890.6L1426 894.3L1428 877.2L1430 863.8L1432 839.4L1434 866.3L1436 851L1438 868.6L1440 861.6L1442 858.3L1444 856L1446 870.9L1448 876.4L1450 870.9L1452 869.6L1454 846.5L1456 855.7L1458 858.8L1460 873L1462 870.3L1464 864.3L1466 860.3L1468 849.1L1470 858.1L1472 834.6L1474 850.4L1476 869.3L1478 894.1L1480 908.6L1482 922.8L1484 930.2L1486 901.8L1488 888.4L1490 865.9L1492 861.4L1494 843.8L1496 852.6L1498 868.2L1500 856.6L1502 847.5L1504 855.9L1506 878.4L1508 883.5L1510 896.6L1512 919.6L1514 885.7L1516 887.8L1518 875.8L1520 882.9L1522 865L1524 849.5L1526 869.8L1528 865.7L1530 859.3L1532 865.1L1534 860.1L1536 877.2L1538 886.5L1540 888.3L1542 881.8L1544 883.9L1546 875.7L1548 875L1550 875L1552 867.5L1554 857.5L1556 852.9L1558 860.2L1560 839.6L1562 860.1L1564 862.6L1566 833.5L1568 853L1570 868.8L1572 852L1574 865.4L1576 860.8L1578 849.2L1580 850.8L1582 863.3L1584 874.8L1586 882.5L1588 885.4L1590 887.5L1592 885.5L1594 872.7L1596 890.3L1598 861L1600 877.1L1602 862.3L1604 870.1L1606 867L1608 867.8L1610 862.9L1612 872.3L1614 894.9L1616 879.2L1618 869.4L1620 917.9L1622 910L1624 892.7L1626 888.9L1628 880.6L1630 881.6L1632 871.9L1634 885.1L1636 879.2L1638 876.7L1640 866.6L1642 890.9L1644 906.4L1646 896.3L1648 899.7L1650 911.6L1652 903.9L1654 905.1L1656 896.6L1658 898.2L1660 889.3L1662 895.1L1664 884.4L1666 874.4L1668 908.8L1670 912.8L1672 904.7L1674 914.6L1676 946.2L1678 943.5L1680 935.1L1682 924.1L1684 904.7L1686 872.1L1688 862.3L1690 863L1692 881.2L1694 858.6L1696 851.7L1698 862.5L1700 866.3L1702 868.8L1704 876.9L1706 885.7L1708 881.5L1710 886.4L1712 876.4L1714 852L1716 867.1L1718 873L1720 884.2L1722 877.5L1724 901.9L1726 879.8L1728 883.9L1730 882.2L1732 896.4L1734 883.2L1736 874.6L1738 882.1L1740 852.9L1742 856.9L1744 859.5L1746 850.4L1748 832.5L1750 843.9L1752 847.2L1754 856.1L1756 854.6L1758 839.7L1760 853.9L1762 854L1764 866.4L1766 855.4L1768 870.8L1770 868.1L1772 874.3L1774 848.5L1776 875.7L1778 890.2L1780 886L1782 891.3L1784 871.9L1786 876.1L1788 881.6L1790 876.6L1792 859.8L1794 862.3L1796 863.2L1798 890.1L1800 891.6L1802 906.2L1804 931.9L1806 937.3L1808 932.5L1810 902.7L1812 875L1814 866.3L1816 849.6L1818 830.8L1820 797.7L1822 773.4L1824 763L1826 766.4L1828 765.6L1830 762.5L1832 772.7L1834 794.6L1836 790.9L1838 792L1840 791L1842 808.5L1844 839.1L1846 868.6L1848 899.8L1850 891.6L1852 922.9L1854 937.3L1856 927.1L1858 917.4L1860 930.3L1862 905.8L1864 903.9L1866 923.6L1868 908.3L1870 885.3L1872 870.7L1874 881.9L1876 875.9L1878 862.9L1880 879.7L1882 856.7L1884 860.6L1886 877.1L1888 891L1890 893.3L1892 899.8L1894 900.3L1896 916.2L1898 893.9L1900 911.2L1902 898.8L1904 891.3L1906 896.6L1908 889.3L1910 871.8L1912 876L1914 866.6L1916 876.9L1918 865.8L1920 856.9L1922 859.6L1924 850.7L1926 845.3L1928 844L1930 839.1L1932 861.6L1934 853.4L1936 882.3L1938 873.2L1940 859.3L1942 858.7L1944 864.1L1946 852.9L1948 841.8L1950 847.7L1952 863.5L1954 851.8L1956 852.6L1958 875.8L1960 892.7L1962 906.4L1964 907L1966 913.2L1968 909.4L1970 936.2L1972 942.4L1974 934.7L1976 911.3L1978 888.9L1980 880.9L1982 861.4L1984 835.7L1986 808.1L1988 802.3L1990 770.2L1992 757.3L1994 757.6L1996 767.3L1998 777L2000 790L2002 765.6L2004 757L2006 786L2008 800.5L2010 820.9L2012 841.9L2014 860.8L2016 876.9L2018 905.8L2020 928.6L2022 939.1L2024 940.6L2026 931.9L2028 952.2L2030 942.4L2032 898.7L2034 889.1L2036 894.2L2038 891.1L2040 878.5L2042 859.8L2044 861.1L2046 861.1L2048 875L2050 890.2L2052 882.8L2054 880.3L2056 887.2L2058 885.7L2060 874.4L2062 857.2L2064 862.7L2066 892.6L2068 881.6L2070 903.5L2072 900L2074 901.4L2076 896.8L2078 905.5L2080 909.4L2082 892.4L2084 915.3L2086 910.8L2088 911.5L2090 901.3L2092 923.7L2094 932.5L2096 907.8L2098 915.4L2100 921.8L2102 925L2104 897.5L2106 860.9L2108 862.2L2110 857.9L2112 861.1L2114 863.7L2116 871.9L2118 863L2120 865.2L2122 841.6L2124 854.8L2126 862.8L2128 890.1L2130 897.5L2132 885.1L2134 878.6L2136 872.4L2138 876L2140 869.9L2142 901.5L2144 900.1L2146 882.8L2148 874.1L2150 881.3L2152 874.2L2154 891.9L2156 871.3L2158 884.2L2160 895.3L2162 867.5L2164 880.3L2166 872.4L2168 869.4L2170 873.6L2172 875.6L2174 888.2L2176 893.2L2178 893L2180 886.2L2182 885.9L2184 897.9L2186 896.7L2188 886.4L2190 878.3L2192 859.4L2194 879.4L2196 854.8L2198 860.5L2200 866.8L2202 845.6L2204 848.2L2206 876.7L2208 860.6L2210 879.4L2212 918.4L2214 894.7L2216 866.7L2218 872.6L2220 896L2222 896.7L2224 885.4L2226 858.1L2228 854.4L2230 866.9L2232 851L2234 871.7L2236 874.2L2238 880.2L2240 876.4L2242 866.4L2244 862.7L2246 856.4L2248 859.3L2250 863.1L2252 858.5L2254 836.3L2256 876.5L2258 862.5L2260 871.9L2262 865.8L2264 877.4L2266 888.8L2268 869.8L2270 886.6L2272 869.2L2274 888.6L2276 873.2L2278 875.5L2280 887.4L2282 880.7L2284 872.9L2286 882.7L2288 878.9L2290 881.3L2292 886.2L2294 873.1L2296 858.5L2298 844.9L2300 853.5L2302 862.9L2304 864.8L2306 871.6L2308 878.7L2310 885.8L2312 897.2L2314 879.5L2316 878.5L2318 868.1L2320 868.8L2322 867.8L2324 851.3L2326 842.5L2328 863.5L2330 861.7L2332 867L2334 850.6L2336 838.8L2338 851.9L2340 840.7L2342 856.2L2344 848.3L2346 836.1L2348 859.4L2350 852.6L2352 843.8L2354 869.4L2356 871.6L2358 884.6L2360 870.5L2362 867.4L2364 857.6L2366 854.4L2368 879.5L2370 883L2372 867.5L2374 887.4L2376 870L2378 861.5L2380 855.7L2382 855.7L2384 857.3L2386 855.6L2388 855.5L2390 863.4L2392 862.8L2394 866.2L2396 851.6L2398 853.9L2400 855.3L2402 865.1L2404 878.3L2406 886.3L2408 874.3L2410 867.5L2412 869.5L2414 857.7L2416 869.8L2418 857.8L2420 873.6L2422 866.4L2424 876.5L2426 867.8L2428 872.1L2430 875L2432 876.4L2434 856.3L2436 881.9L2438 903L2440 902.7L2442 906L2444 892.7L2446 863.3L2448 871.7L2450 872.3L2452 863.9L2454 868.4L2456 865.5L2458 853.5L2460 861.3L2462 842.2L2464 862.2L2466 872.8L2468 1043L2470 1158.8L2472 1182.6L2474 1114.2L2476 969.8L2478 1044.2L2480 1125.9L2482 1029.3L2484 993.6L2486 988.9L2488 992.4L2490 930.5L2492 938L2494 984.7L2496 1090.8L2498 1179L2500 1153.5L2502 1105.8L2504 1024.9L2506 979.2L2508 1087.2L2510 1191.9L2512 1186.2L2514 1136.7L2516 1114.9L2518 1092.5L2520 1104.8L2522 1052.3L2524 1062.8L2526 1118.5L2528 1101.6L2530 1085.5L2532 1075.8L2534 1062.2L2536 1106.5L2538 1056.7" fill="none" stroke="#9c2222" stroke-width="1" stroke-linejoin="miter" shape-rendering="crispEdges" stroke-dasharray="3 2"/>
<g shape-rendering="crispEdges" stroke="#9c9c9c" stroke-width="1">
<line x1="85.5" y1="75" x2="85.5" y2="649"/>
<line x1="85" y1="648.5" x2="1269" y2="648.5"/>
<line x1="1335.5" y1="45" x2="1335.5" y2="649"/>
<line x1="1335" y1="648.5" x2="2538" y2="648.5"/>
<line x1="58.5" y1="706" x2="58.5" y2="1281"/>
<line x1="58" y1="1280.5" x2="1269" y2="1280.5"/>
<line x1="1328.5" y1="706" x2="1328.5" y2="1281"/>
<line x1="1328" y1="1280.5" x2="2539" y2="1280.5"/>
</g>
<line x1="85" y1="493" x2="1270" y2="493" stroke="#ffffff" stroke-width="2" stroke-dasharray="10 2" stroke-dashoffset="1"/>
<line x1="86" y1="493" x2="198" y2="493" stroke="#000" stroke-opacity="0.3" stroke-width="2.2"/>
<line x1="85" y1="561" x2="1270" y2="561" stroke="#ffffff" stroke-width="2" stroke-dasharray="10 2" stroke-dashoffset="1"/>
<line x1="86" y1="561" x2="191" y2="561" stroke="#000" stroke-opacity="0.3" stroke-width="2.2"/>
<line x1="1335" y1="357" x2="2539" y2="357" stroke="#ffffff" stroke-width="2" stroke-dasharray="10 2" stroke-dashoffset="1"/>
<line x1="1336" y1="357" x2="1430" y2="357" stroke="#000" stroke-opacity="0.1" stroke-width="2.2"/>
<line x1="1328" y1="870" x2="2540" y2="870" stroke="#ffffff" stroke-width="2" stroke-dasharray="10 2" stroke-dashoffset="1"/>
<line x1="1329" y1="870" x2="1406" y2="870" stroke="#000" stroke-opacity="0.3" stroke-width="2.2"/>
<rect x="1345.5" y="55.5" width="268" height="62" fill="#151515" fill-opacity="0.78" stroke="#4a4a4a" stroke-width="1"/>
<rect x="1354" y="64" width="19" height="19" fill="#9467c4"/>
<rect x="1354" y="89" width="19" height="19" fill="#bebe23"/>
<text x="558.3" y="64.8" font-family="'Liberation Sans', sans-serif" font-size="12.7" fill="#f2f2f2" text-anchor="start" font-weight="normal" stroke="#f2f2f2" stroke-width="0.2" textLength="236" lengthAdjust="spacingAndGlyphs">H1:IOO-OFI_PD_A_DC_POWER [s-trend]</text>
<text x="521.5" y="697" font-family="'Liberation Sans', sans-serif" font-size="12.7" fill="#f2f2f2" text-anchor="start" font-weight="normal" stroke="#f2f2f2" stroke-width="0.2" textLength="283.4" lengthAdjust="spacingAndGlyphs">H1:SYS-MOTION_C_BDIV_E_POSITION [s-trend]</text>
<text x="1801.3" y="697" font-family="'Liberation Sans', sans-serif" font-size="12.7" fill="#f2f2f2" text-anchor="start" font-weight="normal" stroke="#f2f2f2" stroke-width="0.2" textLength="265.1" lengthAdjust="spacingAndGlyphs">H1:IMC-IM4_TRANS_NSUM_OUT16 [s-trend]</text>
<text x="1380.3" y="79" font-family="'Liberation Sans', sans-serif" font-size="12.7" fill="#f2f2f2" text-anchor="start" font-weight="normal" stroke="#f2f2f2" stroke-width="0.2" textLength="223.2" lengthAdjust="spacingAndGlyphs">H1:ASC-AS_C_SUM_OUTPUT [s-trend]</text>
<text x="1380.3" y="104" font-family="'Liberation Sans', sans-serif" font-size="12.7" fill="#f2f2f2" text-anchor="start" font-weight="normal" stroke="#f2f2f2" stroke-width="0.2" textLength="223.7" lengthAdjust="spacingAndGlyphs">H1:ASC-AS_C_NSUM_OUT16 [s-trend]</text>
<text x="80" y="125.5" font-family="'Liberation Sans', sans-serif" font-size="12.5" fill="#f2f2f2" text-anchor="end" font-weight="normal" stroke="#f2f2f2" stroke-width="0.2" textLength="32.84" lengthAdjust="spacingAndGlyphs">0.006</text>
<text x="80" y="184.5" font-family="'Liberation Sans', sans-serif" font-size="12.5" fill="#f2f2f2" text-anchor="end" font-weight="normal" stroke="#f2f2f2" stroke-width="0.2" textLength="32.84" lengthAdjust="spacingAndGlyphs">0.005</text>
<text x="80" y="243.5" font-family="'Liberation Sans', sans-serif" font-size="12.5" fill="#f2f2f2" text-anchor="end" font-weight="normal" stroke="#f2f2f2" stroke-width="0.2" textLength="32.84" lengthAdjust="spacingAndGlyphs">0.004</text>
<text x="80" y="302.5" font-family="'Liberation Sans', sans-serif" font-size="12.5" fill="#f2f2f2" text-anchor="end" font-weight="normal" stroke="#f2f2f2" stroke-width="0.2" textLength="32.84" lengthAdjust="spacingAndGlyphs">0.003</text>
<text x="80" y="361.5" font-family="'Liberation Sans', sans-serif" font-size="12.5" fill="#f2f2f2" text-anchor="end" font-weight="normal" stroke="#f2f2f2" stroke-width="0.2" textLength="32.84" lengthAdjust="spacingAndGlyphs">0.002</text>
<text x="80" y="420.0" font-family="'Liberation Sans', sans-serif" font-size="12.5" fill="#f2f2f2" text-anchor="end" font-weight="normal" stroke="#f2f2f2" stroke-width="0.2" textLength="32.84" lengthAdjust="spacingAndGlyphs">0.001</text>
<text x="80" y="478.5" font-family="'Liberation Sans', sans-serif" font-size="12.5" fill="#f2f2f2" text-anchor="end" font-weight="normal" stroke="#f2f2f2" stroke-width="0.2" textLength="7.30" lengthAdjust="spacingAndGlyphs">0</text>
<text x="80" y="537.5" font-family="'Liberation Sans', sans-serif" font-size="12.5" fill="#f2f2f2" text-anchor="end" font-weight="normal" stroke="#f2f2f2" stroke-width="0.2" textLength="37.21" lengthAdjust="spacingAndGlyphs">-0.001</text>
<text x="80" y="596.5" font-family="'Liberation Sans', sans-serif" font-size="12.5" fill="#f2f2f2" text-anchor="end" font-weight="normal" stroke="#f2f2f2" stroke-width="0.2" textLength="37.21" lengthAdjust="spacingAndGlyphs">-0.002</text>
<text x="1330.5" y="68.5" font-family="'Liberation Sans', sans-serif" font-size="12.5" fill="#f2f2f2" text-anchor="end" font-weight="normal" stroke="#f2f2f2" stroke-width="0.2" textLength="32.84" lengthAdjust="spacingAndGlyphs">0.025</text>
<text x="1330.5" y="203.5" font-family="'Liberation Sans', sans-serif" font-size="12.5" fill="#f2f2f2" text-anchor="end" font-weight="normal" stroke="#f2f2f2" stroke-width="0.2" textLength="32.84" lengthAdjust="spacingAndGlyphs">0.024</text>
<text x="1330.5" y="339.0" font-family="'Liberation Sans', sans-serif" font-size="12.5" fill="#f2f2f2" text-anchor="end" font-weight="normal" stroke="#f2f2f2" stroke-width="0.2" textLength="32.84" lengthAdjust="spacingAndGlyphs">0.023</text>
<text x="1330.5" y="474.5" font-family="'Liberation Sans', sans-serif" font-size="12.5" fill="#f2f2f2" text-anchor="end" font-weight="normal" stroke="#f2f2f2" stroke-width="0.2" textLength="32.84" lengthAdjust="spacingAndGlyphs">0.022</text>
<text x="1330.5" y="609.5" font-family="'Liberation Sans', sans-serif" font-size="12.5" fill="#f2f2f2" text-anchor="end" font-weight="normal" stroke="#f2f2f2" stroke-width="0.2" textLength="32.84" lengthAdjust="spacingAndGlyphs">0.021</text>
<text x="53" y="817.0" font-family="'Liberation Sans', sans-serif" font-size="12.5" fill="#f2f2f2" text-anchor="end" font-weight="normal" stroke="#f2f2f2" stroke-width="0.2" textLength="7.30" lengthAdjust="spacingAndGlyphs">2</text>
<text x="53" y="934.5" font-family="'Liberation Sans', sans-serif" font-size="12.5" fill="#f2f2f2" text-anchor="end" font-weight="normal" stroke="#f2f2f2" stroke-width="0.2" textLength="7.30" lengthAdjust="spacingAndGlyphs">1</text>
<text x="53" y="1051.5" font-family="'Liberation Sans', sans-serif" font-size="12.5" fill="#f2f2f2" text-anchor="end" font-weight="normal" stroke="#f2f2f2" stroke-width="0.2" textLength="7.30" lengthAdjust="spacingAndGlyphs">0</text>
<text x="53" y="1169.0" font-family="'Liberation Sans', sans-serif" font-size="12.5" fill="#f2f2f2" text-anchor="end" font-weight="normal" stroke="#f2f2f2" stroke-width="0.2" textLength="11.67" lengthAdjust="spacingAndGlyphs">-1</text>
<text x="1323" y="743.0" font-family="'Liberation Sans', sans-serif" font-size="12.5" fill="#f2f2f2" text-anchor="end" font-weight="normal" stroke="#f2f2f2" stroke-width="0.2" textLength="25.54" lengthAdjust="spacingAndGlyphs">9.27</text>
<text x="1323" y="814.4" font-family="'Liberation Sans', sans-serif" font-size="12.5" fill="#f2f2f2" text-anchor="end" font-weight="normal" stroke="#f2f2f2" stroke-width="0.2" textLength="25.54" lengthAdjust="spacingAndGlyphs">9.26</text>
<text x="1323" y="885.9" font-family="'Liberation Sans', sans-serif" font-size="12.5" fill="#f2f2f2" text-anchor="end" font-weight="normal" stroke="#f2f2f2" stroke-width="0.2" textLength="25.54" lengthAdjust="spacingAndGlyphs">9.25</text>
<text x="1323" y="957.3" font-family="'Liberation Sans', sans-serif" font-size="12.5" fill="#f2f2f2" text-anchor="end" font-weight="normal" stroke="#f2f2f2" stroke-width="0.2" textLength="25.54" lengthAdjust="spacingAndGlyphs">9.24</text>
<text x="1323" y="1028.7" font-family="'Liberation Sans', sans-serif" font-size="12.5" fill="#f2f2f2" text-anchor="end" font-weight="normal" stroke="#f2f2f2" stroke-width="0.2" textLength="25.54" lengthAdjust="spacingAndGlyphs">9.23</text>
<text x="1323" y="1100.1" font-family="'Liberation Sans', sans-serif" font-size="12.5" fill="#f2f2f2" text-anchor="end" font-weight="normal" stroke="#f2f2f2" stroke-width="0.2" textLength="25.54" lengthAdjust="spacingAndGlyphs">9.22</text>
<text x="1323" y="1171.6" font-family="'Liberation Sans', sans-serif" font-size="12.5" fill="#f2f2f2" text-anchor="end" font-weight="normal" stroke="#f2f2f2" stroke-width="0.2" textLength="25.54" lengthAdjust="spacingAndGlyphs">9.21</text>
<text x="1323" y="1243.0" font-family="'Liberation Sans', sans-serif" font-size="12.5" fill="#f2f2f2" text-anchor="end" font-weight="normal" stroke="#f2f2f2" stroke-width="0.2" textLength="18.25" lengthAdjust="spacingAndGlyphs">9.2</text>
<text x="293.5" y="665" font-family="'Liberation Sans', sans-serif" font-size="12.5" fill="#f2f2f2" text-anchor="middle" font-weight="normal" stroke="#f2f2f2" stroke-width="0.2" textLength="22.82" lengthAdjust="spacingAndGlyphs">-6m</text>
<text x="530.5" y="665" font-family="'Liberation Sans', sans-serif" font-size="12.5" fill="#f2f2f2" text-anchor="middle" font-weight="normal" stroke="#f2f2f2" stroke-width="0.2" textLength="22.82" lengthAdjust="spacingAndGlyphs">-4m</text>
<text x="766.5" y="665" font-family="'Liberation Sans', sans-serif" font-size="12.5" fill="#f2f2f2" text-anchor="middle" font-weight="normal" stroke="#f2f2f2" stroke-width="0.2" textLength="22.82" lengthAdjust="spacingAndGlyphs">-2m</text>
<text x="1003.5" y="665" font-family="'Liberation Sans', sans-serif" font-size="12.5" fill="#f2f2f2" text-anchor="middle" font-weight="normal" stroke="#f2f2f2" stroke-width="0.2" textLength="7.37" lengthAdjust="spacingAndGlyphs">0</text>
<text x="1240.5" y="665" font-family="'Liberation Sans', sans-serif" font-size="12.5" fill="#f2f2f2" text-anchor="middle" font-weight="normal" stroke="#f2f2f2" stroke-width="0.2" textLength="18.41" lengthAdjust="spacingAndGlyphs">2m</text>
<text x="294.5" y="1296" font-family="'Liberation Sans', sans-serif" font-size="12.5" fill="#f2f2f2" text-anchor="middle" font-weight="normal" stroke="#f2f2f2" stroke-width="0.2" textLength="22.82" lengthAdjust="spacingAndGlyphs">-6m</text>
<text x="530.5" y="1296" font-family="'Liberation Sans', sans-serif" font-size="12.5" fill="#f2f2f2" text-anchor="middle" font-weight="normal" stroke="#f2f2f2" stroke-width="0.2" textLength="22.82" lengthAdjust="spacingAndGlyphs">-4m</text>
<text x="767.5" y="1296" font-family="'Liberation Sans', sans-serif" font-size="12.5" fill="#f2f2f2" text-anchor="middle" font-weight="normal" stroke="#f2f2f2" stroke-width="0.2" textLength="22.82" lengthAdjust="spacingAndGlyphs">-2m</text>
<text x="1003.5" y="1296" font-family="'Liberation Sans', sans-serif" font-size="12.5" fill="#f2f2f2" text-anchor="middle" font-weight="normal" stroke="#f2f2f2" stroke-width="0.2" textLength="7.37" lengthAdjust="spacingAndGlyphs">0</text>
<text x="1240.5" y="1296" font-family="'Liberation Sans', sans-serif" font-size="12.5" fill="#f2f2f2" text-anchor="middle" font-weight="normal" stroke="#f2f2f2" stroke-width="0.2" textLength="18.41" lengthAdjust="spacingAndGlyphs">2m</text>
<text x="1548.5" y="665" font-family="'Liberation Sans', sans-serif" font-size="12.5" fill="#f2f2f2" text-anchor="middle" font-weight="normal" stroke="#f2f2f2" stroke-width="0.2" textLength="22.82" lengthAdjust="spacingAndGlyphs">-6m</text>
<text x="1789.5" y="665" font-family="'Liberation Sans', sans-serif" font-size="12.5" fill="#f2f2f2" text-anchor="middle" font-weight="normal" stroke="#f2f2f2" stroke-width="0.2" textLength="22.82" lengthAdjust="spacingAndGlyphs">-4m</text>
<text x="2029.5" y="665" font-family="'Liberation Sans', sans-serif" font-size="12.5" fill="#f2f2f2" text-anchor="middle" font-weight="normal" stroke="#f2f2f2" stroke-width="0.2" textLength="22.82" lengthAdjust="spacingAndGlyphs">-2m</text>
<text x="2270.5" y="665" font-family="'Liberation Sans', sans-serif" font-size="12.5" fill="#f2f2f2" text-anchor="middle" font-weight="normal" stroke="#f2f2f2" stroke-width="0.2" textLength="7.37" lengthAdjust="spacingAndGlyphs">0</text>
<text x="2511.5" y="665" font-family="'Liberation Sans', sans-serif" font-size="12.5" fill="#f2f2f2" text-anchor="middle" font-weight="normal" stroke="#f2f2f2" stroke-width="0.2" textLength="18.41" lengthAdjust="spacingAndGlyphs">2m</text>
<text x="1542.5" y="1296" font-family="'Liberation Sans', sans-serif" font-size="12.5" fill="#f2f2f2" text-anchor="middle" font-weight="normal" stroke="#f2f2f2" stroke-width="0.2" textLength="22.82" lengthAdjust="spacingAndGlyphs">-6m</text>
<text x="1784.5" y="1296" font-family="'Liberation Sans', sans-serif" font-size="12.5" fill="#f2f2f2" text-anchor="middle" font-weight="normal" stroke="#f2f2f2" stroke-width="0.2" textLength="22.82" lengthAdjust="spacingAndGlyphs">-4m</text>
<text x="2026.5" y="1296" font-family="'Liberation Sans', sans-serif" font-size="12.5" fill="#f2f2f2" text-anchor="middle" font-weight="normal" stroke="#f2f2f2" stroke-width="0.2" textLength="22.82" lengthAdjust="spacingAndGlyphs">-2m</text>
<text x="2268.5" y="1296" font-family="'Liberation Sans', sans-serif" font-size="12.5" fill="#f2f2f2" text-anchor="middle" font-weight="normal" stroke="#f2f2f2" stroke-width="0.2" textLength="7.37" lengthAdjust="spacingAndGlyphs">0</text>
<text x="2510.5" y="1296" font-family="'Liberation Sans', sans-serif" font-size="12.5" fill="#f2f2f2" text-anchor="middle" font-weight="normal" stroke="#f2f2f2" stroke-width="0.2" textLength="18.41" lengthAdjust="spacingAndGlyphs">2m</text>
<text x="0" y="0" font-family="'Liberation Sans', sans-serif" font-size="12.5" fill="#f2f2f2" text-anchor="middle" textLength="40.6" lengthAdjust="spacingAndGlyphs" transform="translate(34 362.2) rotate(-90)">counts</text>
<text x="0" y="0" font-family="'Liberation Sans', sans-serif" font-size="12.5" fill="#f2f2f2" text-anchor="middle" textLength="40.6" lengthAdjust="spacingAndGlyphs" transform="translate(34 994.3) rotate(-90)">counts</text>
<text x="0" y="0" font-family="'Liberation Sans', sans-serif" font-size="12.5" fill="#f2f2f2" text-anchor="middle" textLength="40.6" lengthAdjust="spacingAndGlyphs" transform="translate(1290.2 347) rotate(-90)">counts</text>
<text x="0" y="0" font-family="'Liberation Sans', sans-serif" font-size="12.5" fill="#f2f2f2" text-anchor="middle" textLength="40.6" lengthAdjust="spacingAndGlyphs" transform="translate(1290.4 994.3) rotate(-90)">counts</text>
<text x="89.2" y="485" font-family="'Liberation Sans', sans-serif" font-size="12.5" fill="#f2f2f2" text-anchor="start" font-weight="normal" stroke="#f2f2f2" stroke-width="0.2" textLength="103.8" lengthAdjust="spacingAndGlyphs">Y2=-0.000303774</text>
<text x="89.2" y="552.5" font-family="'Liberation Sans', sans-serif" font-size="12.5" fill="#f2f2f2" text-anchor="start" font-weight="normal" stroke="#f2f2f2" stroke-width="0.2" textLength="96.1" lengthAdjust="spacingAndGlyphs">Y1=-0.00146926</text>
<text x="1172" y="532" font-family="'Liberation Sans', sans-serif" font-size="12.5" fill="#f2f2f2" text-anchor="start" font-weight="normal" stroke="#f2f2f2" stroke-width="0.2" textLength="91" lengthAdjust="spacingAndGlyphs">ΔY=0.00116548</text>
<text x="1339.8" y="348.8" font-family="'Liberation Sans', sans-serif" font-size="12.5" fill="#f2f2f2" text-anchor="start" font-weight="normal" stroke="#f2f2f2" stroke-width="0.2" textLength="82.8" lengthAdjust="spacingAndGlyphs">Y1=0.0228361</text>
<text x="1332.7" y="887.6" font-family="'Liberation Sans', sans-serif" font-size="12.5" fill="#f2f2f2" text-anchor="start" font-weight="normal" stroke="#f2f2f2" stroke-width="0.2" textLength="69.5" lengthAdjust="spacingAndGlyphs">Y1=9.25159</text>
<text x="1079" y="1338.3" font-family="'Liberation Sans', sans-serif" font-size="18.2" fill="#f0f0f0" text-anchor="start" font-weight="normal" stroke="#f0f0f0" stroke-width="0.2" textLength="401" lengthAdjust="spacingAndGlyphs">t0 = Tue Oct 07 2025 16:34:47 UTC [1443890105.4217]</text>
</svg>
<div class="btn" style="left:2px;width:100px"></div>
<div class="btn" style="left:104px;width:100px;border-color:#a3a3a3;background:linear-gradient(#f2f2f2,#d4d4d4)"></div>
<div class="btn" style="left:206px;width:100px"></div>
<div class="btn" style="left:308px;width:100px"></div>
<div class="btn" style="left:2448px;width:80px"></div>
<svg class="abs" style="left:0;top:1356px" width="2560" height="59" viewBox="0 1356 2560 59">
<path d="M12.5 1365.5 L20.5 1370.3 L12.5 1375 Z" fill="#e4e6e1" stroke="#a6a8a3" stroke-width="1"/>
<rect x="116.5" y="1366.5" width="7" height="7" fill="#eeeeee" stroke="#c4c4c4" stroke-width="1"/>
<text x="27" y="1375" font-family="'Liberation Sans', sans-serif" font-size="13" fill="#000" textLength="63.5" lengthAdjust="spacingAndGlyphs" >start online</text>
<text x="130" y="1375" font-family="'Liberation Sans', sans-serif" font-size="13" fill="#a6a6a6" textLength="62" lengthAdjust="spacingAndGlyphs" >stop online</text>
<text x="242" y="1375" font-family="'Liberation Sans', sans-serif" font-size="13" fill="#000" textLength="27.5" lengthAdjust="spacingAndGlyphs" >reset</text>
<text x="320.75" y="1375" font-family="'Liberation Sans', sans-serif" font-size="13" fill="#000" textLength="74.25" lengthAdjust="spacingAndGlyphs" >add channels</text>
<text x="2462" y="1375" font-family="'Liberation Sans', sans-serif" font-size="13" fill="#000" textLength="51.75" lengthAdjust="spacingAndGlyphs" >snapshot</text>
<path d="M2537.8 1375 L2543.9 1366.8 L2550 1375 Z" fill="#333333"/>
<text x="15.5" y="1404.7" font-family="'Liberation Sans', sans-serif" font-size="13" fill="#111" textLength="201" lengthAdjust="spacingAndGlyphs" >h1daqnds1:8088  [428509 channels]</text>
<text x="2403" y="1404.4" font-family="'Liberation Sans', sans-serif" font-size="13" fill="#0000ff" textLength="47" lengthAdjust="spacingAndGlyphs" >ndscope</text>
<text x="2453" y="1404.4" font-family="'Liberation Sans', sans-serif" font-size="13" fill="#0000ff" textLength="34" lengthAdjust="spacingAndGlyphs" >0.19.3</text>
<text x="2489" y="1404.4" font-family="'Liberation Sans', sans-serif" font-size="13" fill="#000" textLength="4" lengthAdjust="spacingAndGlyphs" >(</text>
<text x="2494" y="1404.4" font-family="'Liberation Sans', sans-serif" font-size="13" fill="#0000ff" textLength="60" lengthAdjust="spacingAndGlyphs" >report bug</text>
<text x="2554.5" y="1404.4" font-family="'Liberation Sans', sans-serif" font-size="13" fill="#000" textLength="4" lengthAdjust="spacingAndGlyphs" >)</text>
<g fill="#0000ff"><rect x="2403" y="1407" width="47" height="1"/><rect x="2453" y="1407" width="34" height="1"/><rect x="2494" y="1407" width="60" height="1"/></g>
</svg>
</body></html>
